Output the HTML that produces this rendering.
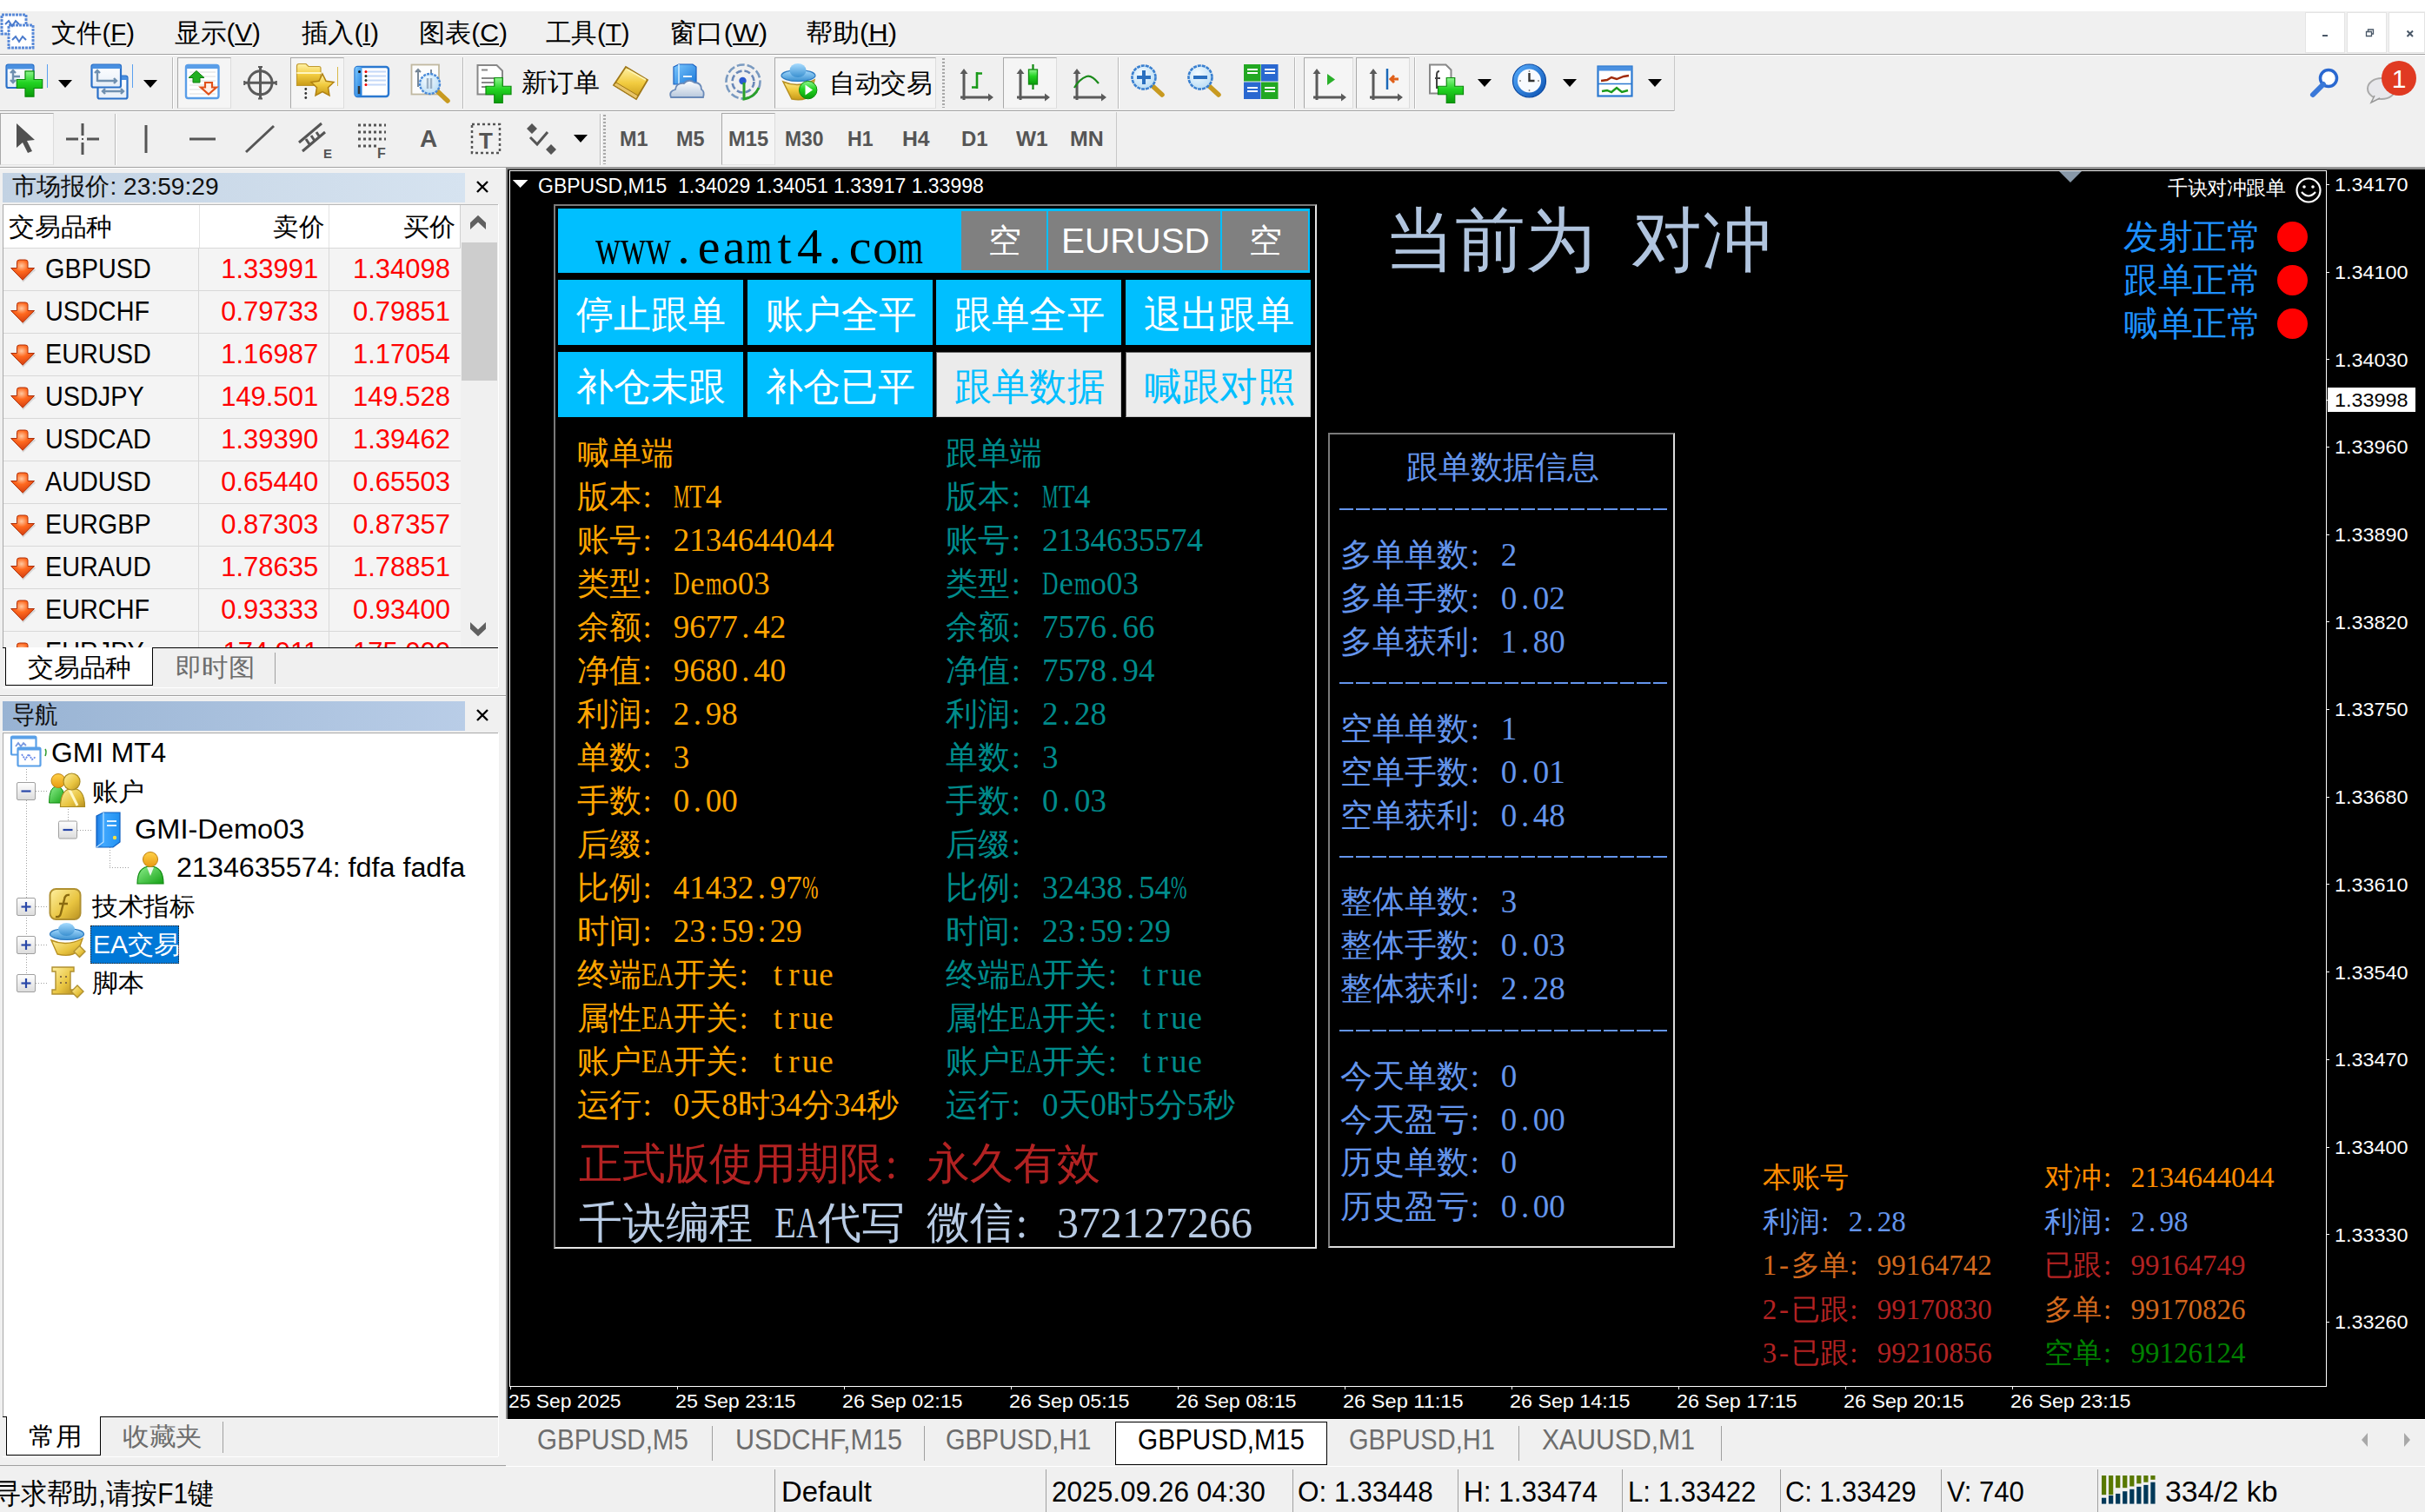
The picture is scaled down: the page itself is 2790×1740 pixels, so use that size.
<!DOCTYPE html><html><head><meta charset="utf-8"><title>MT4</title><style>
*{margin:0;padding:0;box-sizing:border-box}
html,body{width:2790px;height:1740px;overflow:hidden;background:#f0f0f0}
body{position:relative;font-family:'Liberation Sans',sans-serif}
body>div{position:absolute;white-space:nowrap}
i{display:inline-block;width:.5em;text-align:center;font-style:normal}
b{display:inline-block;width:1em;font-weight:inherit}
u{text-decoration:underline;text-decoration-thickness:2px;text-underline-offset:2px}
</style></head><body>
<div style="left:0px;top:0px;width:2790px;height:1740px;background:#f0f0f0"></div>
<div style="left:0px;top:0px;width:2790px;height:13px;background:#fff"></div>
<div style="left:0px;top:62px;width:2790px;height:1px;background:#a0a0a0"></div>
<div style="left:0px;top:127px;width:1927px;height:1px;background:#a0a0a0"></div>
<div style="left:0px;top:192px;width:2790px;height:1px;background:#a0a0a0"></div>
<div style="left:0px;top:63px;width:2790px;height:1px;background:#fff"></div>
<div style="left:0px;top:128px;width:1927px;height:1px;background:#fff"></div>
<svg style="position:absolute;left:0px;top:14px;" width="44" height="46" viewBox="0 0 44 46">
<rect x="2" y="3" width="28" height="22" fill="#fff" stroke="#5a8ad8" stroke-width="3" stroke-dasharray="3 1"/>
<rect x="10" y="15" width="28" height="26" fill="#fff" stroke="#5a8ad8" stroke-width="3" stroke-dasharray="3 1"/>
<path d="M6 14 l4 -4 l4 6 l4 -6 l4 4" stroke="#4a7acc" stroke-width="2" fill="none"/>
<path d="M14 32 l4 -4 l4 6 l4 -6 l4 4" stroke="#4a7acc" stroke-width="2" fill="none"/>
</svg>
<div id="t1" style="left:58.8px;top:23.1px;font-size:30px;line-height:30px;color:#000;font-family:'Liberation Sans',sans-serif;transform:scaleX(0.9762);transform-origin:left top;"><b>文</b><b>件</b>(<u>F</u>)</div>
<div id="t2" style="left:201px;top:23.1px;font-size:30px;line-height:30px;color:#000;font-family:'Liberation Sans',sans-serif;transform:scaleX(0.9899);transform-origin:left top;"><b>显</b><b>示</b>(<u>V</u>)</div>
<div id="t3" style="left:346.6px;top:23.1px;font-size:30px;line-height:30px;color:#000;font-family:'Liberation Sans',sans-serif;transform:scaleX(1.0077);transform-origin:left top;"><b>插</b><b>入</b>(<u>I</u>)</div>
<div id="t4" style="left:481.5px;top:23.1px;font-size:30px;line-height:30px;color:#000;font-family:'Liberation Sans',sans-serif;transform:scaleX(1.0035);transform-origin:left top;"><b>图</b><b>表</b>(<u>C</u>)</div>
<div id="t5" style="left:627.9px;top:23.1px;font-size:30px;line-height:30px;color:#000;font-family:'Liberation Sans',sans-serif;transform:scaleX(0.9824);transform-origin:left top;"><b>工</b><b>具</b>(<u>T</u>)</div>
<div id="t6" style="left:770px;top:23.1px;font-size:30px;line-height:30px;color:#000;font-family:'Liberation Sans',sans-serif;transform:scaleX(1.0446);transform-origin:left top;"><b>窗</b><b>口</b>(<u>W</u>)</div>
<div id="t7" style="left:927px;top:23.1px;font-size:30px;line-height:30px;color:#000;font-family:'Liberation Sans',sans-serif;transform:scaleX(1.0336);transform-origin:left top;"><b>帮</b><b>助</b>(<u>H</u>)</div>
<div style="left:2652px;top:14px;width:46px;height:47px;background:#fff;border:1px solid #e4e4e4"></div>
<div style="left:2700px;top:14px;width:46px;height:47px;background:#fff;border:1px solid #e4e4e4"></div>
<div style="left:2748px;top:14px;width:42px;height:47px;background:#fff;border:1px solid #e4e4e4"></div>
<svg style="position:absolute;left:2652px;top:14px;" width="138" height="47" viewBox="0 0 138 47">
<rect x="20" y="26" width="6" height="2" fill="#4a5868"/>
<path d="M70.5 27.5 h6 v-5 h-6 z M72.5 22.5 v-2.5 h6 v5 h-2" fill="none" stroke="#4a5868" stroke-width="1.3"/>
<path d="M117.5 21.5 l6.5 6.5 M124 21.5 l-6.5 6.5" stroke="#4a5868" stroke-width="2"/>
</svg>
<div style="left:204px;top:66px;width:62px;height:59px;background:#f5f5f5;border:1px solid;border-color:#a8a8a8 #dcdcdc #e4e4e4 #a8a8a8"></div>
<div style="left:334px;top:66px;width:62px;height:59px;background:#f5f5f5;border:1px solid;border-color:#a8a8a8 #dcdcdc #e4e4e4 #a8a8a8"></div>
<div style="left:891px;top:66px;width:186px;height:59px;background:#f5f5f5;border:1px solid;border-color:#a8a8a8 #dcdcdc #e4e4e4 #a8a8a8"></div>
<div style="left:1154px;top:66px;width:62px;height:59px;background:#f5f5f5;border:1px solid;border-color:#a8a8a8 #dcdcdc #e4e4e4 #a8a8a8"></div>
<div style="left:1500px;top:66px;width:57px;height:59px;background:#f5f5f5;border:1px solid;border-color:#a8a8a8 #dcdcdc #e4e4e4 #a8a8a8"></div>
<div style="left:1560px;top:66px;width:62px;height:59px;background:#f5f5f5;border:1px solid;border-color:#a8a8a8 #dcdcdc #e4e4e4 #a8a8a8"></div>
<div style="left:198px;top:66px;width:1px;height:59px;background:#b8b8b8"></div>
<div style="left:199px;top:66px;width:1px;height:59px;background:#fff"></div>
<div style="left:532px;top:66px;width:1px;height:59px;background:#b8b8b8"></div>
<div style="left:533px;top:66px;width:1px;height:59px;background:#fff"></div>
<div style="left:1286px;top:66px;width:1px;height:59px;background:#b8b8b8"></div>
<div style="left:1287px;top:66px;width:1px;height:59px;background:#fff"></div>
<div style="left:1489px;top:66px;width:1px;height:59px;background:#b8b8b8"></div>
<div style="left:1490px;top:66px;width:1px;height:59px;background:#fff"></div>
<div style="left:1627px;top:66px;width:1px;height:59px;background:#b8b8b8"></div>
<div style="left:1628px;top:66px;width:1px;height:59px;background:#fff"></div>
<div style="left:1084px;top:67px;width:3px;height:57px;background:repeating-linear-gradient(#a8a8a8 0 2px,transparent 2px 4px)"></div>
<div style="left:1926px;top:64px;width:1px;height:64px;background:#c8c8c8"></div>
<div style="left:53.5px;top:74px;width:1px;height:27px;background:#5aa0f0"></div>
<svg style="position:absolute;left:66.5px;top:92px;" width="16" height="9" viewBox="0 0 16 9"><path d="M0 0 H16 L8 9 Z" fill="#000"/></svg>
<div style="left:151.5px;top:74px;width:1px;height:27px;background:#5aa0f0"></div>
<svg style="position:absolute;left:164.5px;top:92px;" width="16" height="9" viewBox="0 0 16 9"><path d="M0 0 H16 L8 9 Z" fill="#000"/></svg>
<svg style="position:absolute;left:0px;top:64px" width="950" height="62" viewBox="0 64 950 62"><defs>
<linearGradient id="gG" x1="0" y1="0" x2="0" y2="1"><stop offset="0" stop-color="#8ff58f"/><stop offset=".45" stop-color="#22d422"/><stop offset="1" stop-color="#0a9a0a"/></linearGradient>
<linearGradient id="gWin" x1="0" y1="0" x2="0" y2="1"><stop offset="0" stop-color="#fff"/><stop offset="1" stop-color="#e6eef8"/></linearGradient>
<linearGradient id="gY" x1="0" y1="0" x2="0" y2="1"><stop offset="0" stop-color="#fff2a8"/><stop offset=".5" stop-color="#f2cc40"/><stop offset="1" stop-color="#c89a18"/></linearGradient>
<linearGradient id="gB" x1="0" y1="0" x2="1" y2="1"><stop offset="0" stop-color="#7cc8ff"/><stop offset="1" stop-color="#1a78d8"/></linearGradient>
<linearGradient id="gCl" x1="0" y1="0" x2="0" y2="1"><stop offset="0" stop-color="#ffffff"/><stop offset="1" stop-color="#b8c8dc"/></linearGradient>
<radialGradient id="gGl" cx=".4" cy=".35" r=".7"><stop offset="0" stop-color="#f4fbff"/><stop offset="1" stop-color="#b8dcf4"/></radialGradient>
<linearGradient id="gHat" x1="0" y1="0" x2="0" y2="1"><stop offset="0" stop-color="#a8dcff"/><stop offset="1" stop-color="#3a90d0"/></linearGradient>
<linearGradient id="gClk" x1="0" y1="0" x2="1" y2="1"><stop offset="0" stop-color="#5ab0ff"/><stop offset="1" stop-color="#0a50b0"/></linearGradient>
</defs><rect x="7.5" y="74.5" width="31" height="26.5" rx="2" fill="url(#gWin)" stroke="#2a70c8" stroke-width="2.2"/><path d="M7.5 77 q0 -2.5 2.5 -2.5 h26 q2.5 0 2.5 2.5 v2.5 h-31 z" fill="#4a90e0"/><path d="M15 81 v14 M12 84 l3 -3 3 3 M12 92 l3 3 3 -3 M15 88 h8" stroke="#7090b0" stroke-width="2.4" fill="none"/><path d="M29.0 81.8 h10 v9.7 h9.7 v10 h-9.7 v9.7 h-10 v-9.7 h-9.7 v-10 h9.7 z" fill="url(#gG)" stroke="#0a8a0a" stroke-width="1.2"/><rect x="112.5" y="87.5" width="34" height="26" rx="2" fill="url(#gWin)" stroke="#2a70c8" stroke-width="2.2"/><path d="M112.5 90 q0 -2.5 2.5 -2.5 h29 q2.5 0 2.5 2.5 v2 h-34 z" fill="#4a90e0"/><path d="M118 105 h24 M121 102 l-3 3 3 3 M139 102 l3 3 -3 3" stroke="#7090b0" stroke-width="2.4" fill="none"/><rect x="105.5" y="74.5" width="33.5" height="26" rx="2" fill="url(#gWin)" stroke="#2a70c8" stroke-width="2.2"/><path d="M105.5 77 q0 -2.5 2.5 -2.5 h28.5 q2.5 0 2.5 2.5 v2 h-33.5 z" fill="#4a90e0"/><path d="M112 81 v13 M109 84 l3 -3 3 3 M112 93 h22 M131 90 l3 3 -3 3" stroke="#7090b0" stroke-width="2.4" fill="none"/><rect x="214" y="75" width="37.5" height="38" rx="2.5" fill="#fff" stroke="#5a9ee8" stroke-width="2.4"/><rect x="214" y="75" width="37.5" height="4" fill="#5a9ee8"/><path d="M218 83 h30 M218 88 h30 M218 93 h30 M218 98 h30 M218 103 h30 M218 108 h30" stroke="#e8e8e8" stroke-width="1.5"/><path d="M226 81.5 l9 8 h-5 v5.5 h-8 v-5.5 h-5 z" fill="#22b022" stroke="#108010" stroke-width="1"/><path d="M240 108.5 l9 -8 h-5 v-5.5 h-8 v5.5 h-5 z" fill="#fff0e8" stroke="#e0501a" stroke-width="2.2"/><circle cx="299.5" cy="95.3" r="13.5" fill="none" stroke="#5a5a5a" stroke-width="3"/><path d="M299.5 77 v37 M281 95.3 h37" stroke="#5a5a5a" stroke-width="3"/><path d="M297 77 h5 M297 113.5 h5 M281.2 93 v5 M317.8 93 v5" stroke="#5a5a5a" stroke-width="2"/><path d="M341.5 76 q0 -2.5 2.5 -2.5 h8 l3 3 h12 q2 0 2 2 v20 h-27.5 z" fill="url(#gY)" stroke="#c09a30" stroke-width="1.2"/><path d="M341.5 84 h28" stroke="#fff6c0" stroke-width="2"/><path d="M371 85 l4 8.2 9 1.3 -6.5 6.3 1.5 9 -8 -4.3 -8 4.3 1.5 -9 -6.5 -6.3 9 -1.3 z" fill="url(#gY)" stroke="#b08010" stroke-width="1.5"/><circle cx="351.8" cy="102.5" r="1.4" fill="#333"/><circle cx="351.8" cy="107.5" r="1.4" fill="#333"/><circle cx="351.8" cy="112.5" r="1.4" fill="#333"/><path d="M388.5 77 v22" stroke="#d8b848" stroke-width="1"/><rect x="408.5" y="77" width="38.5" height="34" rx="3" fill="#fff" stroke="#2a78d0" stroke-width="2.4"/><rect x="408.5" y="77" width="8" height="34" rx="2" fill="url(#gB)"/><path d="M413 99 v9" stroke="#333" stroke-width="2.5"/><path d="M423 82.5 h21 M423 87.5 h21 M423 92.5 h21 M423 97.5 h21" stroke="#c4d8f8" stroke-width="1.8"/><circle cx="413.5" cy="82.5" r="1.5" fill="#111"/><circle cx="421" cy="82.5" r="1.5" fill="#e00"/><circle cx="421" cy="87.5" r="1.5" fill="#232"/><circle cx="421" cy="92.5" r="1.5" fill="#232"/><circle cx="421" cy="97.5" r="1.5" fill="#e00"/><rect x="473.5" y="74.5" width="31.5" height="34" fill="#fcfcfc" stroke="#c0b8a0" stroke-width="1.8"/><path d="M481 80 v20 M478 83 l3 -3 3 3 M496 80 v6" stroke="#7a8a9a" stroke-width="2"/><path d="M501 103 l14 13" stroke="#c89a20" stroke-width="5.5" stroke-linecap="round"/><circle cx="494.5" cy="96.5" r="11.5" fill="url(#gGl)" stroke="#4a8ad8" stroke-width="2.4" stroke-dasharray="3 1.2"/><path d="M492 90 v12 M496 90 v12" stroke="#9ab0c4" stroke-width="2.5"/><path d="M549.5 75 h22 l6.5 6.5 v27 h-28.5 z" fill="#fff" stroke="#888" stroke-width="2"/><path d="M554 80.5 h7 M554 90 h18 M554 95 h14 M554 100 h8" stroke="#888" stroke-width="2.2"/><path d="M568.75 89.5 h9.5 v9.75 h9.75 v9.5 h-9.75 v9.75 h-9.5 v-9.75 h-9.75 v-9.5 h9.75 z" fill="url(#gG)" stroke="#0a8a0a" stroke-width="1.2"/><path d="M706 98 L720 77 L745 92 L732 114 Z" fill="url(#gY)" stroke="#a07818" stroke-width="1.8"/><path d="M706 98 L732 114 L734 110 L709 95 Z" fill="#e8c468" stroke="#a07818" stroke-width="1"/><path d="M722 80 L743 92" stroke="#fff4b0" stroke-width="2"/><path d="M775 77 l6 -3 h16 l4 3 v20 h-26 z" fill="url(#gB)" stroke="#1a60c0" stroke-width="1.2"/><path d="M781 74 v23" stroke="#d8f0ff" stroke-width="1.5"/><path d="M786 88 h10" stroke="#e8f6ff" stroke-width="2"/><path d="M772 112 q-3 -7 5 -9 q1 -8 10 -7 q5 -6 12 -1 q8 0 8 8 q4 2 2 9 z" fill="url(#gCl)" stroke="#6a8ab8" stroke-width="1.8"/><circle cx="855" cy="94" r="19.5" fill="none" stroke="#7a9ac0" stroke-width="2.6" stroke-dasharray="9 3"/><circle cx="855" cy="94" r="12.5" fill="none" stroke="#6a88b8" stroke-width="2.6" stroke-dasharray="7 3"/><circle cx="854.5" cy="93" r="4.2" fill="#2a5ad0"/><path d="M856 95 v19 q12 -2 17 -13" stroke="#2aa02a" stroke-width="3" fill="none"/><path d="M901 94 q18 8 36 -2 l-4 16 q-6 9 -22 6 z" fill="url(#gY)" stroke="#b89020" stroke-width="1.5"/><ellipse cx="918.5" cy="87" rx="19.5" ry="6.5" fill="url(#gHat)" stroke="#2a78c0" stroke-width="1.2"/><ellipse cx="918" cy="81" rx="9.5" ry="8" fill="url(#gHat)"/><circle cx="929.7" cy="103.6" r="10.2" fill="url(#gG)" stroke="#0a8a0a" stroke-width="1"/><path d="M926.5 97.5 l8.5 6 -8.5 6 z" fill="#fff"/></svg>
<div id="t8" style="left:599.5px;top:80.4px;font-size:30px;line-height:30px;color:#000;font-family:'Liberation Sans',sans-serif;transform:scaleX(1.0000);transform-origin:left top;"><b>新</b><b>订</b><b>单</b></div>
<div id="t9" style="left:954px;top:81px;font-size:30px;line-height:30px;color:#000;font-family:'Liberation Sans',sans-serif;transform:scaleX(0.9912);transform-origin:left top;"><b>自</b><b>动</b><b>交</b><b>易</b></div>
<svg style="position:absolute;left:1700px;top:91px;" width="16" height="9" viewBox="0 0 16 9"><path d="M0 0 H16 L8 9 Z" fill="#000"/></svg>
<svg style="position:absolute;left:1798px;top:91px;" width="16" height="9" viewBox="0 0 16 9"><path d="M0 0 H16 L8 9 Z" fill="#000"/></svg>
<svg style="position:absolute;left:1896px;top:91px;" width="16" height="9" viewBox="0 0 16 9"><path d="M0 0 H16 L8 9 Z" fill="#000"/></svg>
<svg style="position:absolute;left:1090px;top:64px" width="840" height="62" viewBox="1090 64 840 62"><defs>
<linearGradient id="hG" x1="0" y1="0" x2="0" y2="1"><stop offset="0" stop-color="#8ff58f"/><stop offset=".45" stop-color="#22d422"/><stop offset="1" stop-color="#0a9a0a"/></linearGradient>
<linearGradient id="hWin" x1="0" y1="0" x2="0" y2="1"><stop offset="0" stop-color="#fff"/><stop offset="1" stop-color="#e6eef8"/></linearGradient>
<linearGradient id="hY" x1="0" y1="0" x2="0" y2="1"><stop offset="0" stop-color="#fff2a8"/><stop offset=".5" stop-color="#f2cc40"/><stop offset="1" stop-color="#c89a18"/></linearGradient>
<linearGradient id="hB" x1="0" y1="0" x2="1" y2="1"><stop offset="0" stop-color="#7cc8ff"/><stop offset="1" stop-color="#1a78d8"/></linearGradient>
<linearGradient id="hCl" x1="0" y1="0" x2="0" y2="1"><stop offset="0" stop-color="#ffffff"/><stop offset="1" stop-color="#b8c8dc"/></linearGradient>
<radialGradient id="hGl" cx=".4" cy=".35" r=".7"><stop offset="0" stop-color="#f4fbff"/><stop offset="1" stop-color="#b8dcf4"/></radialGradient>
<linearGradient id="hHat" x1="0" y1="0" x2="0" y2="1"><stop offset="0" stop-color="#a8dcff"/><stop offset="1" stop-color="#3a90d0"/></linearGradient>
<linearGradient id="hClk" x1="0" y1="0" x2="1" y2="1"><stop offset="0" stop-color="#5ab0ff"/><stop offset="1" stop-color="#0a50b0"/></linearGradient>
</defs><path d="M1109 115 v-32 M1105 112 h34" stroke="#5a5a5a" stroke-width="3" fill="none"/><path d="M1104.5 85 l4.5 -6 4.5 6 z M1137 107.5 l6 4.5 -6 4.5 z" fill="#5a5a5a"/><path d="M1124 83 v19 M1124 84.5 h6 M1118 100.5 h6" stroke="#1a9a1a" stroke-width="2.6" fill="none"/><path d="M1174 115 v-32 M1170 112 h34" stroke="#5a5a5a" stroke-width="3" fill="none"/><path d="M1169.5 85 l4.5 -6 4.5 6 z M1202 107.5 l6 4.5 -6 4.5 z" fill="#5a5a5a"/><rect x="1183.5" y="80" width="10" height="17" fill="url(#hG)" stroke="#108a10" stroke-width="1.3"/><path d="M1188.5 74 v6 M1188.5 97 v6" stroke="#108a10" stroke-width="2.2"/><path d="M1239 115 v-32 M1235 112 h34" stroke="#5a5a5a" stroke-width="3" fill="none"/><path d="M1234.5 85 l4.5 -6 4.5 6 z M1267 107.5 l6 4.5 -6 4.5 z" fill="#5a5a5a"/><path d="M1236 101 q6 -10 14 -13 q6 -2 14 8" stroke="#1a8a1a" stroke-width="2.2" fill="none"/><path d="M1325 98 l12 11" stroke="#c89a20" stroke-width="5.5" stroke-linecap="round"/><circle cx="1316" cy="89" r="13.5" fill="url(#hGl)" stroke="#3a80d0" stroke-width="2.6" stroke-dasharray="4 1"/><path d="M1308 89 h16" stroke="#2a70c0" stroke-width="4"/><path d="M1316 81 v16" stroke="#2a70c0" stroke-width="4"/><path d="M1390 98 l12 11" stroke="#c89a20" stroke-width="5.5" stroke-linecap="round"/><circle cx="1381" cy="89" r="13.5" fill="url(#hGl)" stroke="#3a80d0" stroke-width="2.6" stroke-dasharray="4 1"/><path d="M1373 89 h16" stroke="#2a70c0" stroke-width="4"/><rect x="1431" y="74" width="19.5" height="19.5" fill="#22a822"/><rect x="1451" y="74" width="19.5" height="19.5" fill="#2a68d0"/><rect x="1431" y="94.5" width="19.5" height="19.5" fill="#2a68d0"/><rect x="1451" y="94.5" width="19.5" height="19.5" fill="#22a822"/><path d="M1435 84 h12 M1455 84 h12 M1435 105 h12 M1455 105 h12 M1435 80 h12 M1455 80 h12 M1435 101 h12 M1455 101 h12" stroke="#fff" stroke-width="2"/><path d="M1515 115 v-32 M1511 112 h34" stroke="#5a5a5a" stroke-width="3" fill="none"/><path d="M1510.5 85 l4.5 -6 4.5 6 z M1543 107.5 l6 4.5 -6 4.5 z" fill="#5a5a5a"/><path d="M1527 85 l9 6.5 -9 6.5 z" fill="#2ab02a"/><path d="M1580 115 v-32 M1576 112 h34" stroke="#5a5a5a" stroke-width="3" fill="none"/><path d="M1575.5 85 l4.5 -6 4.5 6 z M1608 107.5 l6 4.5 -6 4.5 z" fill="#5a5a5a"/><path d="M1596 79 v24" stroke="#1a68b8" stroke-width="2.5"/><path d="M1609 91 h-8 M1604 87 l-4 4 4 4" stroke="#e0601a" stroke-width="3" fill="none"/><path d="M1645 74.5 h18.5 l6 6 v27 h-24.5 z" fill="#fff" stroke="#888" stroke-width="2"/><path d="M1656 82 q-3 0 -3 4 v16 M1651 90 h6" stroke="#444" stroke-width="2" fill="none"/><path d="M1664.25 89.5 h9.5 v9.75 h9.75 v9.5 h-9.75 v9.75 h-9.5 v-9.75 h-9.75 v-9.5 h9.75 z" fill="url(#hG)" stroke="#0a8a0a" stroke-width="1.2"/><circle cx="1759.5" cy="93" r="19" fill="url(#hClk)" stroke="#0a48a0" stroke-width="1.2"/><circle cx="1759.5" cy="93" r="13.5" fill="#f8fbff"/><path d="M1759.5 84 v9 h6" stroke="#333" stroke-width="2.4" fill="none"/><path d="M1759.5 81 v2 M1771 93 h-2 M1759.5 105 v-2 M1748 93 h2" stroke="#888" stroke-width="1.5"/><rect x="1838.5" y="76.5" width="39" height="34" fill="#fff" stroke="#2a78d0" stroke-width="2.2"/><rect x="1838.5" y="76.5" width="39" height="5" fill="#4a90e0"/><path d="M1842 93 l7 -1 5 -3 6 2 8 -3 6 -1" stroke="#a02a0a" stroke-width="2.4" fill="none"/><path d="M1839 96.5 h38" stroke="#2a78d0" stroke-width="1.5"/><path d="M1843 105 l6 -1 5 2 6 -5 6 5 7 -2" stroke="#1a9a1a" stroke-width="2.4" fill="none"/></svg>
<svg style="position:absolute;left:2656px;top:76px;" width="40" height="38" viewBox="0 0 40 38"><circle cx="23" cy="14" r="9.5" fill="#fff" stroke="#2a68d0" stroke-width="3.5"/><path d="M17 21 l-12 12" stroke="#3a78d8" stroke-width="6" stroke-linecap="round"/></svg>
<svg style="position:absolute;left:2720px;top:66px;" width="70" height="56" viewBox="0 0 70 56">
<ellipse cx="20" cy="36" rx="16" ry="12" fill="#e8e8ec" stroke="#aaa" stroke-width="2"/>
<path d="M12 44 l-4 8 10 -5" fill="#e8e8ec" stroke="#999" stroke-width="1.5"/>
<circle cx="40" cy="24" r="20" fill="#e03a22"/>
<text x="40" y="35" font-family="Liberation Sans" font-size="30" fill="#fff" text-anchor="middle">1</text>
</svg>
<div style="left:0px;top:130px;width:62px;height:60px;background:#f5f5f5;border:1px solid;border-color:#a8a8a8 #dcdcdc #e4e4e4 #a8a8a8"></div>
<div style="left:132px;top:131px;width:1px;height:59px;background:#b8b8b8"></div>
<div style="left:133px;top:131px;width:1px;height:59px;background:#fff"></div>
<div style="left:830px;top:130px;width:62px;height:60px;background:#f5f5f5;border:1px solid;border-color:#a8a8a8 #dcdcdc #e4e4e4 #a8a8a8"></div>
<div style="left:690px;top:131px;width:1px;height:59px;background:#b8b8b8"></div>
<div style="left:691px;top:131px;width:1px;height:59px;background:#fff"></div>
<div style="left:694px;top:132px;width:3px;height:57px;background:repeating-linear-gradient(#a8a8a8 0 2px,transparent 2px 4px)"></div>
<div style="left:1284px;top:129px;width:1px;height:63px;background:#c8c8c8"></div>
<svg style="position:absolute;left:14px;top:140px;" width="30" height="40" viewBox="0 0 30 40"><path d="M5 2 v28 l7 -6 6 12 5 -2 -6 -12 9 -1 z" fill="#505050"/></svg>
<svg style="position:absolute;left:74px;top:140px;" width="42" height="40" viewBox="0 0 42 40"><path d="M21 2 v14 M21 24 v14 M2 20 h14 M26 20 h14" stroke="#555" stroke-width="3"/><rect x="20" y="19" width="2" height="2" fill="#555"/></svg>
<svg style="position:absolute;left:160px;top:142px;" width="16" height="36" viewBox="0 0 16 36"><path d="M8 2 v32" stroke="#555" stroke-width="3"/></svg>
<svg style="position:absolute;left:216px;top:150px;" width="36" height="20" viewBox="0 0 36 20"><path d="M2 10 h30" stroke="#555" stroke-width="3"/></svg>
<svg style="position:absolute;left:280px;top:142px;" width="38" height="36" viewBox="0 0 38 36"><path d="M3 33 l32 -30" stroke="#555" stroke-width="3"/></svg>
<svg style="position:absolute;left:340px;top:138px;" width="46" height="46" viewBox="0 0 46 46"><path d="M4 26 l26 -22 M8 36 l26 -22 M12 22 l4 6 M18 18 l4 6 M24 14 l4 6" stroke="#555" stroke-width="3"/>
<text x="32" y="44" font-family="Liberation Sans" font-weight="bold" font-size="15" fill="#555">E</text></svg>
<svg style="position:absolute;left:410px;top:140px;" width="40" height="44" viewBox="0 0 40 44"><path d="M2 4 h32 M2 12 h32 M2 20 h32 M2 28 h22" stroke="#555" stroke-width="3" stroke-dasharray="3 3"/>
<text x="24" y="42" font-family="Liberation Sans" font-weight="bold" font-size="16" fill="#555">F</text></svg>
<div id="t10" style="left:483px;top:145.52px;font-size:28px;line-height:28px;color:#555;font-family:'Liberation Sans',sans-serif;font-weight:bold">A</div>
<svg style="position:absolute;left:540px;top:140px;" width="38" height="40" viewBox="0 0 38 40"><rect x="3" y="3" width="32" height="33" fill="none" stroke="#555" stroke-width="2.5" stroke-dasharray="3 3"/>
<text x="19" y="31" font-family="Liberation Sans" font-weight="bold" font-size="26" fill="#555" text-anchor="middle">T</text></svg>
<svg style="position:absolute;left:604px;top:140px;" width="40" height="40" viewBox="0 0 40 40"><path d="M2 8 l6 -6 6 6 -6 6 z M24 32 l6 -6 6 6 -6 6 z" fill="#555"/><path d="M6 18 l8 8 12 -14" stroke="#555" stroke-width="3" fill="none"/></svg>
<svg style="position:absolute;left:660px;top:155px;" width="16" height="9" viewBox="0 0 16 9"><path d="M0 0 H16 L8 9 Z" fill="#000"/></svg>
<div id="t11" style="left:713px;top:147.58px;font-size:24.5px;line-height:24.5px;color:#555;font-family:'Liberation Sans',sans-serif;transform:scaleX(0.9565);transform-origin:left top;font-weight:bold">M1</div>
<div id="t12" style="left:778px;top:147.58px;font-size:24.5px;line-height:24.5px;color:#555;font-family:'Liberation Sans',sans-serif;transform:scaleX(0.9565);transform-origin:left top;font-weight:bold">M5</div>
<div id="t13" style="left:838px;top:147.58px;font-size:24.5px;line-height:24.5px;color:#555;font-family:'Liberation Sans',sans-serif;transform:scaleX(0.9667);transform-origin:left top;font-weight:bold">M15</div>
<div id="t14" style="left:903px;top:147.58px;font-size:24.5px;line-height:24.5px;color:#555;font-family:'Liberation Sans',sans-serif;transform:scaleX(0.9341);transform-origin:left top;font-weight:bold">M30</div>
<div id="t15" style="left:975.3px;top:147.58px;font-size:24.5px;line-height:24.5px;color:#555;font-family:'Liberation Sans',sans-serif;transform:scaleX(0.9430);transform-origin:left top;font-weight:bold">H1</div>
<div id="t16" style="left:1038px;top:147.58px;font-size:24.5px;line-height:24.5px;color:#555;font-family:'Liberation Sans',sans-serif;transform:scaleX(1.0100);transform-origin:left top;font-weight:bold">H4</div>
<div id="t17" style="left:1106px;top:147.58px;font-size:24.5px;line-height:24.5px;color:#555;font-family:'Liberation Sans',sans-serif;transform:scaleX(0.9767);transform-origin:left top;font-weight:bold">D1</div>
<div id="t18" style="left:1169px;top:147.58px;font-size:24.5px;line-height:24.5px;color:#555;font-family:'Liberation Sans',sans-serif;transform:scaleX(0.9966);transform-origin:left top;font-weight:bold">W1</div>
<div id="t19" style="left:1231px;top:147.58px;font-size:24.5px;line-height:24.5px;color:#555;font-family:'Liberation Sans',sans-serif;transform:scaleX(1.0162);transform-origin:left top;font-weight:bold">MN</div>
<div style="left:0px;top:193px;width:582px;height:1px;background:#fff"></div>
<div style="left:3px;top:199px;width:532px;height:34px;background:linear-gradient(90deg,#c2d2e3,#d6e3f0)"></div>
<div id="t20" style="left:14px;top:200.94px;font-size:28px;line-height:28px;color:#111;font-family:'Liberation Sans',sans-serif;transform:scaleX(1.0043);transform-origin:left top;"><b>市</b><b>场</b><b>报</b><b>价</b>: 23:59:29</div>
<svg style="position:absolute;left:546.5px;top:206.5px;" width="16" height="16" viewBox="0 0 16 16"><path d="M2 2 L14 14 M14 2 L2 14" stroke="#000" stroke-width="2.4"/></svg>
<div style="left:3px;top:235px;width:570px;height:510px;background:#f4f4f4;border-top:1px solid #b8b8b8;border-left:1px solid #a8a8a8"></div>
<div style="left:4px;top:236px;width:524.5px;height:49px;background:#fff"></div>
<div style="left:528.5px;top:236px;width:1px;height:49px;background:#d0d0d0"></div>
<div style="left:4px;top:284.5px;width:526px;height:1px;background:#d8d8d8"></div>
<div style="left:228.5px;top:236px;width:1px;height:49px;background:#e4e4e4"></div>
<div style="left:378px;top:236px;width:1px;height:49px;background:#e4e4e4"></div>
<div style="left:530px;top:236px;width:43px;height:509px;background:#f0f0f0"></div>
<div style="left:573px;top:235px;width:1px;height:556px;background:#fff"></div>
<div id="t21" style="left:10px;top:247.42px;font-size:29px;line-height:29px;color:#000;font-family:'Liberation Sans',sans-serif;transform:scaleX(1.0261);transform-origin:left top;"><b>交</b><b>易</b><b>品</b><b>种</b></div>
<div id="t22" style="left:314px;top:247.42px;font-size:29px;line-height:29px;color:#000;font-family:'Liberation Sans',sans-serif;transform:scaleX(1.0175);transform-origin:left top;"><b>卖</b><b>价</b></div>
<div id="t23" style="left:464px;top:247.42px;font-size:29px;line-height:29px;color:#000;font-family:'Liberation Sans',sans-serif;transform:scaleX(1.0357);transform-origin:left top;"><b>买</b><b>价</b></div>
<div style="left:4px;top:285px;width:526px;height:460px;overflow:hidden"><div style="position:absolute;left:0;top:48.50px;width:526px;height:1px;background:#d8d8d8"></div><svg style="position:absolute;left:6px;top:12.00px" width="34" height="30" viewBox="0 0 34 30"><defs><radialGradient id="ga0" cx=".45" cy=".3" r=".8"><stop offset="0" stop-color="#ffc8a0"/><stop offset=".35" stop-color="#ff6a20"/><stop offset="1" stop-color="#c83008"/></radialGradient></defs><path d="M16 27 l14 -14 -1 2" stroke="#d8d8d8" stroke-width="2" fill="none"/><path d="M9.5 4.5 q0 -2.5 3 -2.5 h6.5 q3 0 3 2.5 v7 h7.5 l-13.4 13.8 -13.4 -13.8 h6.8 z" fill="url(#ga0)" stroke="#b03008" stroke-width="1"/></svg><div style="position:absolute;left:48px;top:9.04px;font-size:31px;line-height:31px;color:#000;transform:scaleX(0.93);transform-origin:left top">GBPUSD</div><div style="position:absolute;right:163.8px;top:9.04px;font-size:31px;line-height:31px;color:#f00;transform:scaleX(1.0);transform-origin:right top">1.33991</div><div style="position:absolute;right:12px;top:9.04px;font-size:31px;line-height:31px;color:#f00;transform:scaleX(1.0);transform-origin:right top">1.34098</div><div style="position:absolute;left:0;top:97.55px;width:526px;height:1px;background:#d8d8d8"></div><svg style="position:absolute;left:6px;top:61.05px" width="34" height="30" viewBox="0 0 34 30"><defs><radialGradient id="ga1" cx=".45" cy=".3" r=".8"><stop offset="0" stop-color="#ffc8a0"/><stop offset=".35" stop-color="#ff6a20"/><stop offset="1" stop-color="#c83008"/></radialGradient></defs><path d="M16 27 l14 -14 -1 2" stroke="#d8d8d8" stroke-width="2" fill="none"/><path d="M9.5 4.5 q0 -2.5 3 -2.5 h6.5 q3 0 3 2.5 v7 h7.5 l-13.4 13.8 -13.4 -13.8 h6.8 z" fill="url(#ga1)" stroke="#b03008" stroke-width="1"/></svg><div style="position:absolute;left:48px;top:58.09px;font-size:31px;line-height:31px;color:#000;transform:scaleX(0.93);transform-origin:left top">USDCHF</div><div style="position:absolute;right:163.8px;top:58.09px;font-size:31px;line-height:31px;color:#f00;transform:scaleX(1.0);transform-origin:right top">0.79733</div><div style="position:absolute;right:12px;top:58.09px;font-size:31px;line-height:31px;color:#f00;transform:scaleX(1.0);transform-origin:right top">0.79851</div><div style="position:absolute;left:0;top:146.60px;width:526px;height:1px;background:#d8d8d8"></div><svg style="position:absolute;left:6px;top:110.10px" width="34" height="30" viewBox="0 0 34 30"><defs><radialGradient id="ga2" cx=".45" cy=".3" r=".8"><stop offset="0" stop-color="#ffc8a0"/><stop offset=".35" stop-color="#ff6a20"/><stop offset="1" stop-color="#c83008"/></radialGradient></defs><path d="M16 27 l14 -14 -1 2" stroke="#d8d8d8" stroke-width="2" fill="none"/><path d="M9.5 4.5 q0 -2.5 3 -2.5 h6.5 q3 0 3 2.5 v7 h7.5 l-13.4 13.8 -13.4 -13.8 h6.8 z" fill="url(#ga2)" stroke="#b03008" stroke-width="1"/></svg><div style="position:absolute;left:48px;top:107.14px;font-size:31px;line-height:31px;color:#000;transform:scaleX(0.93);transform-origin:left top">EURUSD</div><div style="position:absolute;right:163.8px;top:107.14px;font-size:31px;line-height:31px;color:#f00;transform:scaleX(1.0);transform-origin:right top">1.16987</div><div style="position:absolute;right:12px;top:107.14px;font-size:31px;line-height:31px;color:#f00;transform:scaleX(1.0);transform-origin:right top">1.17054</div><div style="position:absolute;left:0;top:195.65px;width:526px;height:1px;background:#d8d8d8"></div><svg style="position:absolute;left:6px;top:159.15px" width="34" height="30" viewBox="0 0 34 30"><defs><radialGradient id="ga3" cx=".45" cy=".3" r=".8"><stop offset="0" stop-color="#ffc8a0"/><stop offset=".35" stop-color="#ff6a20"/><stop offset="1" stop-color="#c83008"/></radialGradient></defs><path d="M16 27 l14 -14 -1 2" stroke="#d8d8d8" stroke-width="2" fill="none"/><path d="M9.5 4.5 q0 -2.5 3 -2.5 h6.5 q3 0 3 2.5 v7 h7.5 l-13.4 13.8 -13.4 -13.8 h6.8 z" fill="url(#ga3)" stroke="#b03008" stroke-width="1"/></svg><div style="position:absolute;left:48px;top:156.19px;font-size:31px;line-height:31px;color:#000;transform:scaleX(0.93);transform-origin:left top">USDJPY</div><div style="position:absolute;right:163.8px;top:156.19px;font-size:31px;line-height:31px;color:#f00;transform:scaleX(1.0);transform-origin:right top">149.501</div><div style="position:absolute;right:12px;top:156.19px;font-size:31px;line-height:31px;color:#f00;transform:scaleX(1.0);transform-origin:right top">149.528</div><div style="position:absolute;left:0;top:244.70px;width:526px;height:1px;background:#d8d8d8"></div><svg style="position:absolute;left:6px;top:208.20px" width="34" height="30" viewBox="0 0 34 30"><defs><radialGradient id="ga4" cx=".45" cy=".3" r=".8"><stop offset="0" stop-color="#ffc8a0"/><stop offset=".35" stop-color="#ff6a20"/><stop offset="1" stop-color="#c83008"/></radialGradient></defs><path d="M16 27 l14 -14 -1 2" stroke="#d8d8d8" stroke-width="2" fill="none"/><path d="M9.5 4.5 q0 -2.5 3 -2.5 h6.5 q3 0 3 2.5 v7 h7.5 l-13.4 13.8 -13.4 -13.8 h6.8 z" fill="url(#ga4)" stroke="#b03008" stroke-width="1"/></svg><div style="position:absolute;left:48px;top:205.24px;font-size:31px;line-height:31px;color:#000;transform:scaleX(0.93);transform-origin:left top">USDCAD</div><div style="position:absolute;right:163.8px;top:205.24px;font-size:31px;line-height:31px;color:#f00;transform:scaleX(1.0);transform-origin:right top">1.39390</div><div style="position:absolute;right:12px;top:205.24px;font-size:31px;line-height:31px;color:#f00;transform:scaleX(1.0);transform-origin:right top">1.39462</div><div style="position:absolute;left:0;top:293.75px;width:526px;height:1px;background:#d8d8d8"></div><svg style="position:absolute;left:6px;top:257.25px" width="34" height="30" viewBox="0 0 34 30"><defs><radialGradient id="ga5" cx=".45" cy=".3" r=".8"><stop offset="0" stop-color="#ffc8a0"/><stop offset=".35" stop-color="#ff6a20"/><stop offset="1" stop-color="#c83008"/></radialGradient></defs><path d="M16 27 l14 -14 -1 2" stroke="#d8d8d8" stroke-width="2" fill="none"/><path d="M9.5 4.5 q0 -2.5 3 -2.5 h6.5 q3 0 3 2.5 v7 h7.5 l-13.4 13.8 -13.4 -13.8 h6.8 z" fill="url(#ga5)" stroke="#b03008" stroke-width="1"/></svg><div style="position:absolute;left:48px;top:254.29px;font-size:31px;line-height:31px;color:#000;transform:scaleX(0.93);transform-origin:left top">AUDUSD</div><div style="position:absolute;right:163.8px;top:254.29px;font-size:31px;line-height:31px;color:#f00;transform:scaleX(1.0);transform-origin:right top">0.65440</div><div style="position:absolute;right:12px;top:254.29px;font-size:31px;line-height:31px;color:#f00;transform:scaleX(1.0);transform-origin:right top">0.65503</div><div style="position:absolute;left:0;top:342.80px;width:526px;height:1px;background:#d8d8d8"></div><svg style="position:absolute;left:6px;top:306.30px" width="34" height="30" viewBox="0 0 34 30"><defs><radialGradient id="ga6" cx=".45" cy=".3" r=".8"><stop offset="0" stop-color="#ffc8a0"/><stop offset=".35" stop-color="#ff6a20"/><stop offset="1" stop-color="#c83008"/></radialGradient></defs><path d="M16 27 l14 -14 -1 2" stroke="#d8d8d8" stroke-width="2" fill="none"/><path d="M9.5 4.5 q0 -2.5 3 -2.5 h6.5 q3 0 3 2.5 v7 h7.5 l-13.4 13.8 -13.4 -13.8 h6.8 z" fill="url(#ga6)" stroke="#b03008" stroke-width="1"/></svg><div style="position:absolute;left:48px;top:303.34px;font-size:31px;line-height:31px;color:#000;transform:scaleX(0.93);transform-origin:left top">EURGBP</div><div style="position:absolute;right:163.8px;top:303.34px;font-size:31px;line-height:31px;color:#f00;transform:scaleX(1.0);transform-origin:right top">0.87303</div><div style="position:absolute;right:12px;top:303.34px;font-size:31px;line-height:31px;color:#f00;transform:scaleX(1.0);transform-origin:right top">0.87357</div><div style="position:absolute;left:0;top:391.85px;width:526px;height:1px;background:#d8d8d8"></div><svg style="position:absolute;left:6px;top:355.35px" width="34" height="30" viewBox="0 0 34 30"><defs><radialGradient id="ga7" cx=".45" cy=".3" r=".8"><stop offset="0" stop-color="#ffc8a0"/><stop offset=".35" stop-color="#ff6a20"/><stop offset="1" stop-color="#c83008"/></radialGradient></defs><path d="M16 27 l14 -14 -1 2" stroke="#d8d8d8" stroke-width="2" fill="none"/><path d="M9.5 4.5 q0 -2.5 3 -2.5 h6.5 q3 0 3 2.5 v7 h7.5 l-13.4 13.8 -13.4 -13.8 h6.8 z" fill="url(#ga7)" stroke="#b03008" stroke-width="1"/></svg><div style="position:absolute;left:48px;top:352.39px;font-size:31px;line-height:31px;color:#000;transform:scaleX(0.93);transform-origin:left top">EURAUD</div><div style="position:absolute;right:163.8px;top:352.39px;font-size:31px;line-height:31px;color:#f00;transform:scaleX(1.0);transform-origin:right top">1.78635</div><div style="position:absolute;right:12px;top:352.39px;font-size:31px;line-height:31px;color:#f00;transform:scaleX(1.0);transform-origin:right top">1.78851</div><div style="position:absolute;left:0;top:440.90px;width:526px;height:1px;background:#d8d8d8"></div><svg style="position:absolute;left:6px;top:404.40px" width="34" height="30" viewBox="0 0 34 30"><defs><radialGradient id="ga8" cx=".45" cy=".3" r=".8"><stop offset="0" stop-color="#ffc8a0"/><stop offset=".35" stop-color="#ff6a20"/><stop offset="1" stop-color="#c83008"/></radialGradient></defs><path d="M16 27 l14 -14 -1 2" stroke="#d8d8d8" stroke-width="2" fill="none"/><path d="M9.5 4.5 q0 -2.5 3 -2.5 h6.5 q3 0 3 2.5 v7 h7.5 l-13.4 13.8 -13.4 -13.8 h6.8 z" fill="url(#ga8)" stroke="#b03008" stroke-width="1"/></svg><div style="position:absolute;left:48px;top:401.44px;font-size:31px;line-height:31px;color:#000;transform:scaleX(0.93);transform-origin:left top">EURCHF</div><div style="position:absolute;right:163.8px;top:401.44px;font-size:31px;line-height:31px;color:#f00;transform:scaleX(1.0);transform-origin:right top">0.93333</div><div style="position:absolute;right:12px;top:401.44px;font-size:31px;line-height:31px;color:#f00;transform:scaleX(1.0);transform-origin:right top">0.93400</div><div style="position:absolute;left:0;top:489.95px;width:526px;height:1px;background:#d8d8d8"></div><svg style="position:absolute;left:6px;top:453.45px" width="34" height="30" viewBox="0 0 34 30"><defs><radialGradient id="ga9" cx=".45" cy=".3" r=".8"><stop offset="0" stop-color="#ffc8a0"/><stop offset=".35" stop-color="#ff6a20"/><stop offset="1" stop-color="#c83008"/></radialGradient></defs><path d="M16 27 l14 -14 -1 2" stroke="#d8d8d8" stroke-width="2" fill="none"/><path d="M9.5 4.5 q0 -2.5 3 -2.5 h6.5 q3 0 3 2.5 v7 h7.5 l-13.4 13.8 -13.4 -13.8 h6.8 z" fill="url(#ga9)" stroke="#b03008" stroke-width="1"/></svg><div style="position:absolute;left:48px;top:450.49px;font-size:31px;line-height:31px;color:#000;transform:scaleX(0.93);transform-origin:left top">EURJPY</div><div style="position:absolute;right:163.8px;top:450.49px;font-size:31px;line-height:31px;color:#f00;transform:scaleX(1.0);transform-origin:right top">174.911</div><div style="position:absolute;right:12px;top:450.49px;font-size:31px;line-height:31px;color:#f00;transform:scaleX(1.0);transform-origin:right top">175.000</div><div style="position:absolute;left:223.5px;top:0;width:1px;height:460px;background:#d8d8d8"></div><div style="position:absolute;left:374px;top:0;width:1px;height:460px;background:#d8d8d8"></div></div>
<svg style="position:absolute;left:530px;top:240px" width="40" height="30" viewBox="530 240 40 30"><path d="M541 256.2 L550 247.8 L559 256.2 L559 264 L550 255.7 L541 264 Z" fill="#606060"/></svg>
<div style="left:530.5px;top:279px;width:41px;height:158.5px;background:#cdcdcd"></div>
<svg style="position:absolute;left:530px;top:710px" width="40" height="30" viewBox="530 710 40 30"><path d="M541 716 L550 724.4 L559 716 L559 723.8 L550 732.2 L541 723.8 Z" fill="#606060"/></svg>
<div style="left:3px;top:745px;width:570px;height:1px;background:#000"></div>
<div style="left:6px;top:745px;width:170px;height:44px;background:#fff;border:1px solid #000;border-top:none"></div>
<div id="t24" style="left:32px;top:754.22px;font-size:29px;line-height:29px;color:#000;font-family:'Liberation Sans',sans-serif;transform:scaleX(1.0261);transform-origin:left top;"><b>交</b><b>易</b><b>品</b><b>种</b></div>
<div id="t25" style="left:201.7px;top:754.22px;font-size:29px;line-height:29px;color:#6d6d6d;font-family:'Liberation Sans',sans-serif;transform:scaleX(1.0476);transform-origin:left top;"><b>即</b><b>时</b><b>图</b></div>
<div style="left:316px;top:751px;width:1px;height:36px;background:#a0a0a0"></div>
<div style="left:3px;top:790.5px;width:570px;height:1px;background:#fff"></div>
<div style="left:0px;top:800px;width:582px;height:1px;background:#a0a0a0"></div>
<div style="left:0px;top:801px;width:582px;height:1px;background:#fff"></div>
<div style="left:3px;top:807px;width:532px;height:34px;background:linear-gradient(90deg,#98b3d3,#b9cde7)"></div>
<div id="t26" style="left:13.5px;top:809.44px;font-size:28px;line-height:28px;color:#111;font-family:'Liberation Sans',sans-serif;transform:scaleX(0.9455);transform-origin:left top;"><b>导</b><b>航</b></div>
<svg style="position:absolute;left:546.5px;top:815px;" width="16" height="16" viewBox="0 0 16 16"><path d="M2 2 L14 14 M14 2 L2 14" stroke="#000" stroke-width="2.4"/></svg>
<div style="left:3px;top:843px;width:570px;height:787px;background:#fff;border-top:1px solid #a8a8a8;border-left:1px solid #a8a8a8"></div>
<div style="left:30px;top:885px;width:1px;height:246px;background:repeating-linear-gradient(#a0a0a0 0 1px,transparent 1px 3px)"></div>
<div style="left:41px;top:910px;width:15px;height:1px;background:repeating-linear-gradient(90deg,#a0a0a0 0 1px,transparent 1px 3px)"></div>
<div style="left:78px;top:928px;width:1px;height:27px;background:repeating-linear-gradient(#a0a0a0 0 1px,transparent 1px 3px)"></div>
<div style="left:89px;top:955px;width:17px;height:1px;background:repeating-linear-gradient(90deg,#a0a0a0 0 1px,transparent 1px 3px)"></div>
<div style="left:126px;top:975px;width:1px;height:23px;background:repeating-linear-gradient(#a0a0a0 0 1px,transparent 1px 3px)"></div>
<div style="left:126px;top:998px;width:24px;height:1px;background:repeating-linear-gradient(90deg,#a0a0a0 0 1px,transparent 1px 3px)"></div>
<div style="left:41px;top:1043px;width:15px;height:1px;background:repeating-linear-gradient(90deg,#a0a0a0 0 1px,transparent 1px 3px)"></div>
<div style="left:41px;top:1087px;width:15px;height:1px;background:repeating-linear-gradient(90deg,#a0a0a0 0 1px,transparent 1px 3px)"></div>
<div style="left:41px;top:1131px;width:15px;height:1px;background:repeating-linear-gradient(90deg,#a0a0a0 0 1px,transparent 1px 3px)"></div>
<svg style="position:absolute;left:0;top:840px" width="250" height="320" viewBox="0 840 250 320"><defs>
<linearGradient id="nBox" x1="0" y1="0" x2="0" y2="1"><stop offset="0" stop-color="#ffffff"/><stop offset="1" stop-color="#dcdcdc"/></linearGradient>
<linearGradient id="nGr" x1="0" y1="0" x2="1" y2="1"><stop offset="0" stop-color="#8ef08e"/><stop offset="1" stop-color="#14a014"/></linearGradient>
<linearGradient id="nYe" x1="0" y1="0" x2="1" y2="1"><stop offset="0" stop-color="#fff0a0"/><stop offset=".6" stop-color="#e8c440"/><stop offset="1" stop-color="#b89020"/></linearGradient>
<linearGradient id="nOr" x1="0" y1="0" x2="0" y2="1"><stop offset="0" stop-color="#ffd24a"/><stop offset="1" stop-color="#e89a10"/></linearGradient>
<linearGradient id="nBl" x1="0" y1="0" x2="1" y2="0"><stop offset="0" stop-color="#1a78e0"/><stop offset=".3" stop-color="#40a8ff"/><stop offset="1" stop-color="#2090f0"/></linearGradient>
<linearGradient id="nHat" x1="0" y1="0" x2="0" y2="1"><stop offset="0" stop-color="#a8dcff"/><stop offset="1" stop-color="#3a90d0"/></linearGradient>
</defs><g transform="translate(19 900)"><rect x="0.5" y="0.5" width="21" height="20" rx="1.5" fill="url(#nBox)" stroke="#a0a0a0"/><path d="M5.5 10.5 h11" stroke="#2a48a8" stroke-width="2.2"/></g><g transform="translate(67 944.5)"><rect x="0.5" y="0.5" width="21" height="20" rx="1.5" fill="url(#nBox)" stroke="#a0a0a0"/><path d="M5.5 10.5 h11" stroke="#2a48a8" stroke-width="2.2"/></g><g transform="translate(19 1033)"><rect x="0.5" y="0.5" width="21" height="20" rx="1.5" fill="url(#nBox)" stroke="#a0a0a0"/><path d="M5.5 10.5 h11" stroke="#2a48a8" stroke-width="2.2"/><path d="M11 5 v11" stroke="#2a48a8" stroke-width="2.2"/></g><g transform="translate(19 1077)"><rect x="0.5" y="0.5" width="21" height="20" rx="1.5" fill="url(#nBox)" stroke="#a0a0a0"/><path d="M5.5 10.5 h11" stroke="#2a48a8" stroke-width="2.2"/><path d="M11 5 v11" stroke="#2a48a8" stroke-width="2.2"/></g><g transform="translate(19 1121)"><rect x="0.5" y="0.5" width="21" height="20" rx="1.5" fill="url(#nBox)" stroke="#a0a0a0"/><path d="M5.5 10.5 h11" stroke="#2a48a8" stroke-width="2.2"/><path d="M11 5 v11" stroke="#2a48a8" stroke-width="2.2"/></g><rect x="13" y="847.5" width="28.5" height="21" rx="1.5" fill="#fff" stroke="#5aa0e8" stroke-width="2.2"/><rect x="13" y="847.5" width="28.5" height="3" fill="#5aa0e8"/><path d="M18 859 l3 -4 3 4 3 -4 3 3" stroke="#7a9ae0" stroke-width="1.8" fill="none"/><rect x="20.5" y="860.5" width="26" height="21" rx="1.5" fill="#fff" stroke="#5aa0e8" stroke-width="2.2"/><rect x="20.5" y="860.5" width="26" height="3" fill="#5aa0e8"/><path d="M25 868 l4 6 4 -6 4 6 4 -3" stroke="#6a8ae8" stroke-width="1.8" fill="none" stroke-dasharray="2 1"/><path d="M52 870 q2 -5 0 -8" stroke="#2a9a2a" stroke-width="1.5" fill="none"/><path d="M56.5 924 q0 -19 9 -19 q9 0 9 19 z" fill="url(#nGr)" stroke="#108a10" stroke-width="1"/><circle cx="67" cy="898.5" r="8" fill="url(#nOr)" stroke="#c08010" stroke-width="1"/><path d="M69.5 928.5 q0 -21 14 -21 q14 0 14 21 z" fill="url(#nYe)" stroke="#a88a20" stroke-width="1.2"/><path d="M80 909 l9 18" stroke="#fff8c8" stroke-width="3"/><circle cx="82.5" cy="899.5" r="9.5" fill="url(#nYe)" stroke="#a88a20" stroke-width="1.2"/><path d="M111 939 l8 -4 h19 v34 l-8 6 h-19 z" fill="url(#nBl)" stroke="#1060c0" stroke-width="1.2"/><path d="M119 935 v34 l-8 6" stroke="#bfe4ff" stroke-width="1.2" fill="none"/><path d="M123 945 h11 M123 950 h11" stroke="#e0f2ff" stroke-width="2.2"/><circle cx="132" cy="964" r="2.2" fill="#f8e040"/><path d="M158 1017 q0 -20 15 -20 q15 0 15 20 z" fill="url(#nGr)" stroke="#108a10" stroke-width="1.2"/><path d="M169 998 l4 10 4 -10" fill="#e8f8e8"/><circle cx="173" cy="989" r="8.5" fill="url(#nOr)" stroke="#c08010" stroke-width="1"/><rect x="57.5" y="1023" width="35" height="35" rx="7" fill="url(#nYe)" stroke="#b09030" stroke-width="2"/><path d="M80 1030 q-5 -1 -6 5 l-4 16 q-1 5 -6 4 M68 1040 h10" stroke="#8a6a10" stroke-width="2.4" fill="none"/><path d="M59 1082 q18 8 36 -2 l-5 14 q-8 8 -24 4 z" fill="url(#nYe)" stroke="#b89020" stroke-width="1.4"/><ellipse cx="77" cy="1075" rx="19.5" ry="6.5" fill="url(#nHat)" stroke="#2a78c0" stroke-width="1.2"/><ellipse cx="76.5" cy="1069.5" rx="9.5" ry="7.5" fill="url(#nHat)"/><path d="M85 1095 l6.5 -6.5 6.5 6.5 -6.5 6.5 z" fill="url(#nYe)" stroke="#b09030" stroke-width="1.4"/><path d="M60 1113 h25 v5 h-4 v21 h4 v5 h-25 v-5 h4 v-21 h-4 z" fill="url(#nYe)" stroke="#b09030" stroke-width="1.4"/><path d="M69 1124 h2 M75 1124 h2 M69 1131 h2 M75 1131 h2" stroke="#8a7040" stroke-width="2"/><path d="M82 1141 l7 -7 7 7 -7 7 z" fill="url(#nYe)" stroke="#b09030" stroke-width="1.4"/></svg>
<div id="t27" style="left:59px;top:850.74px;font-size:31px;line-height:31px;color:#000;font-family:'Liberation Sans',sans-serif;transform:scaleX(1.0241);transform-origin:left top;">GMI MT4</div>
<div id="t28" style="left:106px;top:897.22px;font-size:29px;line-height:29px;color:#000;font-family:'Liberation Sans',sans-serif;transform:scaleX(1.0364);transform-origin:left top;"><b>账</b><b>户</b></div>
<div id="t29" style="left:154.7px;top:938.64px;font-size:31px;line-height:31px;color:#000;font-family:'Liberation Sans',sans-serif;transform:scaleX(1.0500);transform-origin:left top;">GMI-Demo03</div>
<div id="t30" style="left:203px;top:983.04px;font-size:31px;line-height:31px;color:#000;font-family:'Liberation Sans',sans-serif;transform:scaleX(1.0419);transform-origin:left top;">2134635574: fdfa fadfa</div>
<div id="t31" style="left:106.4px;top:1029.42px;font-size:29px;line-height:29px;color:#000;font-family:'Liberation Sans',sans-serif;transform:scaleX(1.0224);transform-origin:left top;"><b>技</b><b>术</b><b>指</b><b>标</b></div>
<div style="left:104px;top:1065px;width:102px;height:44px;background:#0078d7;border:1px dotted #222"></div>
<div id="t32" style="left:107px;top:1073.42px;font-size:29px;line-height:29px;color:#fff;font-family:'Liberation Sans',sans-serif;transform:scaleX(1.0358);transform-origin:left top;">EA<b>交</b><b>易</b></div>
<div id="t33" style="left:106px;top:1117.42px;font-size:29px;line-height:29px;color:#000;font-family:'Liberation Sans',sans-serif;transform:scaleX(1.0351);transform-origin:left top;"><b>脚</b><b>本</b></div>
<div style="left:3px;top:1630px;width:570px;height:1px;background:#000"></div>
<div style="left:6.7px;top:1630px;width:109px;height:45px;background:#fff;border:1px solid #000;border-top:none"></div>
<div id="t34" style="left:32.7px;top:1639.22px;font-size:29px;line-height:29px;color:#000;font-family:'Liberation Sans',sans-serif;transform:scaleX(1.0545);transform-origin:left top;"><b>常</b><b>用</b></div>
<div id="t35" style="left:141px;top:1639.22px;font-size:29px;line-height:29px;color:#6d6d6d;font-family:'Liberation Sans',sans-serif;transform:scaleX(1.0588);transform-origin:left top;"><b>收</b><b>藏</b><b>夹</b></div>
<div style="left:256px;top:1636px;width:1px;height:36px;background:#a0a0a0"></div>
<div style="left:573px;top:843px;width:1px;height:833px;background:#fff"></div>
<div style="left:3px;top:1676px;width:570px;height:1px;background:#fff"></div>
<div style="left:0px;top:1686px;width:582px;height:1px;background:#a0a0a0"></div>
<div style="left:582px;top:193px;width:2208px;height:1441px;background:#000"></div>
<div style="left:582px;top:193px;width:2px;height:1441px;background:#8a8a8a"></div>
<div style="left:582px;top:193px;width:2208px;height:1.5px;background:#8a8a8a"></div>
<div style="left:586px;top:196px;width:2091px;height:1px;background:#fff"></div>
<div style="left:586px;top:196px;width:1px;height:1400px;background:#fff"></div>
<div style="left:2676px;top:196px;width:1px;height:1400px;background:#fff"></div>
<div style="left:586px;top:1595px;width:2091px;height:1px;background:#fff"></div>
<svg style="position:absolute;left:589px;top:206px;" width="20" height="11" viewBox="0 0 20 11"><path d="M0.8 1 H18.5 L9.6 10 Z" fill="#fff"/></svg>
<div id="t36" style="left:619px;top:203.32px;font-size:23px;line-height:23px;color:#fff;font-family:'Liberation Sans',sans-serif;transform:scaleX(1.0000);transform-origin:left top;white-space:pre">GBPUSD,M15  1.34029 1.34051 1.33917 1.33998</div>
<svg style="position:absolute;left:2369px;top:197px;" width="27" height="14" viewBox="0 0 27 14"><path d="M0 0 H26 L13 13 Z" fill="#8898a8"/></svg>
<div style="left:2677px;top:211.8px;width:3px;height:1px;background:#fff"></div>
<div id="t37" style="left:2685.5px;top:202.2px;font-size:22.5px;line-height:22.5px;color:#fff;font-family:'Liberation Sans',sans-serif;transform:scaleX(1.0399);transform-origin:left top;">1.34170</div>
<div style="left:2677px;top:312.5px;width:3px;height:1px;background:#fff"></div>
<div id="t38" style="left:2685.5px;top:302.9px;font-size:22.5px;line-height:22.5px;color:#fff;font-family:'Liberation Sans',sans-serif;transform:scaleX(1.0399);transform-origin:left top;">1.34100</div>
<div style="left:2677px;top:413.2px;width:3px;height:1px;background:#fff"></div>
<div id="t39" style="left:2685.5px;top:403.6px;font-size:22.5px;line-height:22.5px;color:#fff;font-family:'Liberation Sans',sans-serif;transform:scaleX(1.0399);transform-origin:left top;">1.34030</div>
<div style="left:2677px;top:513.9px;width:3px;height:1px;background:#fff"></div>
<div id="t40" style="left:2685.5px;top:504.3px;font-size:22.5px;line-height:22.5px;color:#fff;font-family:'Liberation Sans',sans-serif;transform:scaleX(1.0399);transform-origin:left top;">1.33960</div>
<div style="left:2677px;top:614.6px;width:3px;height:1px;background:#fff"></div>
<div id="t41" style="left:2685.5px;top:605px;font-size:22.5px;line-height:22.5px;color:#fff;font-family:'Liberation Sans',sans-serif;transform:scaleX(1.0399);transform-origin:left top;">1.33890</div>
<div style="left:2677px;top:715.3px;width:3px;height:1px;background:#fff"></div>
<div id="t42" style="left:2685.5px;top:705.7px;font-size:22.5px;line-height:22.5px;color:#fff;font-family:'Liberation Sans',sans-serif;transform:scaleX(1.0399);transform-origin:left top;">1.33820</div>
<div style="left:2677px;top:816px;width:3px;height:1px;background:#fff"></div>
<div id="t43" style="left:2685.5px;top:806.4px;font-size:22.5px;line-height:22.5px;color:#fff;font-family:'Liberation Sans',sans-serif;transform:scaleX(1.0399);transform-origin:left top;">1.33750</div>
<div style="left:2677px;top:916.7px;width:3px;height:1px;background:#fff"></div>
<div id="t44" style="left:2685.5px;top:907.1px;font-size:22.5px;line-height:22.5px;color:#fff;font-family:'Liberation Sans',sans-serif;transform:scaleX(1.0399);transform-origin:left top;">1.33680</div>
<div style="left:2677px;top:1017.4px;width:3px;height:1px;background:#fff"></div>
<div id="t45" style="left:2685.5px;top:1007.8px;font-size:22.5px;line-height:22.5px;color:#fff;font-family:'Liberation Sans',sans-serif;transform:scaleX(1.0399);transform-origin:left top;">1.33610</div>
<div style="left:2677px;top:1118.1px;width:3px;height:1px;background:#fff"></div>
<div id="t46" style="left:2685.5px;top:1108.5px;font-size:22.5px;line-height:22.5px;color:#fff;font-family:'Liberation Sans',sans-serif;transform:scaleX(1.0399);transform-origin:left top;">1.33540</div>
<div style="left:2677px;top:1218.8px;width:3px;height:1px;background:#fff"></div>
<div id="t47" style="left:2685.5px;top:1209.2px;font-size:22.5px;line-height:22.5px;color:#fff;font-family:'Liberation Sans',sans-serif;transform:scaleX(1.0399);transform-origin:left top;">1.33470</div>
<div style="left:2677px;top:1319.5px;width:3px;height:1px;background:#fff"></div>
<div id="t48" style="left:2685.5px;top:1309.9px;font-size:22.5px;line-height:22.5px;color:#fff;font-family:'Liberation Sans',sans-serif;transform:scaleX(1.0399);transform-origin:left top;">1.33400</div>
<div style="left:2677px;top:1420.2px;width:3px;height:1px;background:#fff"></div>
<div id="t49" style="left:2685.5px;top:1410.6px;font-size:22.5px;line-height:22.5px;color:#fff;font-family:'Liberation Sans',sans-serif;transform:scaleX(1.0399);transform-origin:left top;">1.33330</div>
<div style="left:2677px;top:1520.9px;width:3px;height:1px;background:#fff"></div>
<div id="t50" style="left:2685.5px;top:1511.3px;font-size:22.5px;line-height:22.5px;color:#fff;font-family:'Liberation Sans',sans-serif;transform:scaleX(1.0399);transform-origin:left top;">1.33260</div>
<div style="left:2677px;top:460px;width:3px;height:1px;background:#fff"></div>
<div style="left:2678px;top:446px;width:101px;height:28px;background:#fff"></div>
<div id="t51" style="left:2685.5px;top:449.9px;font-size:22.5px;line-height:22.5px;color:#000;font-family:'Liberation Sans',sans-serif;transform:scaleX(1.0399);transform-origin:left top;">1.33998</div>
<div style="left:586.8px;top:1595px;width:1px;height:4px;background:#fff"></div>
<div id="t52" style="left:585.3px;top:1602.4px;font-size:22.5px;line-height:22.5px;color:#fff;font-family:'Liberation Sans',sans-serif;transform:scaleX(1.0150);transform-origin:left top;">25 Sep 2025</div>
<div style="left:778.8px;top:1595px;width:1px;height:4px;background:#fff"></div>
<div id="t53" style="left:777.3px;top:1602.4px;font-size:22.5px;line-height:22.5px;color:#fff;font-family:'Liberation Sans',sans-serif;transform:scaleX(1.0351);transform-origin:left top;">25 Sep 23:15</div>
<div style="left:970.8px;top:1595px;width:1px;height:4px;background:#fff"></div>
<div id="t54" style="left:969.3px;top:1602.4px;font-size:22.5px;line-height:22.5px;color:#fff;font-family:'Liberation Sans',sans-serif;transform:scaleX(1.0351);transform-origin:left top;">26 Sep 02:15</div>
<div style="left:1162.8px;top:1595px;width:1px;height:4px;background:#fff"></div>
<div id="t55" style="left:1161.3px;top:1602.4px;font-size:22.5px;line-height:22.5px;color:#fff;font-family:'Liberation Sans',sans-serif;transform:scaleX(1.0351);transform-origin:left top;">26 Sep 05:15</div>
<div style="left:1354.8px;top:1595px;width:1px;height:4px;background:#fff"></div>
<div id="t56" style="left:1353.3px;top:1602.4px;font-size:22.5px;line-height:22.5px;color:#fff;font-family:'Liberation Sans',sans-serif;transform:scaleX(1.0351);transform-origin:left top;">26 Sep 08:15</div>
<div style="left:1546.8px;top:1595px;width:1px;height:4px;background:#fff"></div>
<div id="t57" style="left:1545.3px;top:1602.4px;font-size:22.5px;line-height:22.5px;color:#fff;font-family:'Liberation Sans',sans-serif;transform:scaleX(1.0483);transform-origin:left top;">26 Sep 11:15</div>
<div style="left:1738.8px;top:1595px;width:1px;height:4px;background:#fff"></div>
<div id="t58" style="left:1737.3px;top:1602.4px;font-size:22.5px;line-height:22.5px;color:#fff;font-family:'Liberation Sans',sans-serif;transform:scaleX(1.0351);transform-origin:left top;">26 Sep 14:15</div>
<div style="left:1930.8px;top:1595px;width:1px;height:4px;background:#fff"></div>
<div id="t59" style="left:1929.3px;top:1602.4px;font-size:22.5px;line-height:22.5px;color:#fff;font-family:'Liberation Sans',sans-serif;transform:scaleX(1.0351);transform-origin:left top;">26 Sep 17:15</div>
<div style="left:2122.8px;top:1595px;width:1px;height:4px;background:#fff"></div>
<div id="t60" style="left:2121.3px;top:1602.4px;font-size:22.5px;line-height:22.5px;color:#fff;font-family:'Liberation Sans',sans-serif;transform:scaleX(1.0351);transform-origin:left top;">26 Sep 20:15</div>
<div style="left:2314.8px;top:1595px;width:1px;height:4px;background:#fff"></div>
<div id="t61" style="left:2313.3px;top:1602.4px;font-size:22.5px;line-height:22.5px;color:#fff;font-family:'Liberation Sans',sans-serif;transform:scaleX(1.0351);transform-origin:left top;">26 Sep 23:15</div>
<div style="left:637.3px;top:235.3px;width:877.7px;height:1202px;border-top:2px solid #7a7a7a;border-left:2px solid #7a7a7a;border-right:2px solid #e6e6e6;border-bottom:2px solid #e6e6e6"></div>
<div style="left:642px;top:240px;width:865px;height:74.4px;background:#00bfff"></div>
<div id="t62" style="left:685px;top:255px;font-size:58px;line-height:58px;color:#000;font-family:'Liberation Serif',serif;"><i style="transform:scaleX(0.692);transform-origin:0 0">w</i><i style="transform:scaleX(0.692);transform-origin:0 0">w</i><i style="transform:scaleX(0.692);transform-origin:0 0">w</i><i>.</i><i>e</i><i>a</i><i style="transform:scaleX(0.643);transform-origin:0 0">m</i><i>t</i><i>4</i><i>.</i><i>c</i><i>o</i><i style="transform:scaleX(0.643);transform-origin:0 0">m</i></div>
<div style="left:1106px;top:242.8px;width:98px;height:67.9px;background:#808080"></div>
<div style="left:1206px;top:242.8px;width:198px;height:67.9px;background:#808080"></div>
<div style="left:1406px;top:242.8px;width:98.5px;height:67.9px;background:#808080"></div>
<div id="t63" style="left:1137px;top:258.22px;font-size:38px;line-height:38px;color:#fff;font-family:'Liberation Serif',serif;"><b>空</b></div>
<div id="t64" style="left:1221.4px;top:255.96px;font-size:41.5px;line-height:41.5px;color:#fff;font-family:'Liberation Sans',sans-serif;transform:scaleX(0.9749);transform-origin:left top;">EURUSD</div>
<div id="t65" style="left:1437px;top:258.22px;font-size:38px;line-height:38px;color:#fff;font-family:'Liberation Serif',serif;"><b>空</b></div>
<div style="left:642px;top:322.4px;width:213px;height:74.6px;background:#00bfff"></div>
<div id="t66" style="left:662.5px;top:340.32px;font-size:44px;line-height:44px;color:#fff;font-family:'Liberation Sans',sans-serif;transform:scaleX(0.9771);transform-origin:left top;"><b>停</b><b>止</b><b>跟</b><b>单</b></div>
<div style="left:642px;top:405px;width:213px;height:75px;background:#00bfff"></div>
<div id="t67" style="left:662.5px;top:422.72px;font-size:44px;line-height:44px;color:#fff;font-family:'Liberation Sans',sans-serif;transform:scaleX(0.9771);transform-origin:left top;"><b>补</b><b>仓</b><b>未</b><b>跟</b></div>
<div style="left:860px;top:322.4px;width:213px;height:74.6px;background:#00bfff"></div>
<div id="t68" style="left:880.5px;top:340.32px;font-size:44px;line-height:44px;color:#fff;font-family:'Liberation Sans',sans-serif;transform:scaleX(0.9884);transform-origin:left top;"><b>账</b><b>户</b><b>全</b><b>平</b></div>
<div style="left:860px;top:405px;width:213px;height:75px;background:#00bfff"></div>
<div id="t69" style="left:880.5px;top:422.72px;font-size:44px;line-height:44px;color:#fff;font-family:'Liberation Sans',sans-serif;transform:scaleX(0.9771);transform-origin:left top;"><b>补</b><b>仓</b><b>已</b><b>平</b></div>
<div style="left:1077px;top:322.4px;width:213px;height:74.6px;background:#00bfff"></div>
<div id="t70" style="left:1097.5px;top:340.32px;font-size:44px;line-height:44px;color:#fff;font-family:'Liberation Sans',sans-serif;transform:scaleX(0.9828);transform-origin:left top;"><b>跟</b><b>单</b><b>全</b><b>平</b></div>
<div style="left:1077px;top:405px;width:213px;height:75px;background:#ebebeb;border:1.5px solid;border-color:#6a6a6a #c8c8c8 #c8c8c8 #6a6a6a"></div>
<div id="t71" style="left:1097.5px;top:422.72px;font-size:44px;line-height:44px;color:#00bfff;font-family:'Liberation Sans',sans-serif;transform:scaleX(0.9828);transform-origin:left top;"><b>跟</b><b>单</b><b>数</b><b>据</b></div>
<div style="left:1295px;top:322.4px;width:213px;height:74.6px;background:#00bfff"></div>
<div id="t72" style="left:1315.5px;top:340.32px;font-size:44px;line-height:44px;color:#fff;font-family:'Liberation Sans',sans-serif;transform:scaleX(0.9828);transform-origin:left top;"><b>退</b><b>出</b><b>跟</b><b>单</b></div>
<div style="left:1295px;top:405px;width:213px;height:75px;background:#ebebeb;border:1.5px solid;border-color:#6a6a6a #c8c8c8 #c8c8c8 #6a6a6a"></div>
<div id="t73" style="left:1315.5px;top:422.72px;font-size:44px;line-height:44px;color:#00bfff;font-family:'Liberation Sans',sans-serif;transform:scaleX(0.9942);transform-origin:left top;"><b>喊</b><b>跟</b><b>对</b><b>照</b></div>
<div id="t74" style="left:663.7px;top:503.23px;font-size:37px;line-height:37px;color:#ffa500;font-family:'Liberation Serif',serif;"><b>喊</b><b>单</b><b>端</b></div>
<div id="t75" style="left:1088px;top:503.23px;font-size:37px;line-height:37px;color:#008b8b;font-family:'Liberation Serif',serif;"><b>跟</b><b>单</b><b>端</b></div>
<div id="t76" style="left:663.7px;top:553.23px;font-size:37px;line-height:37px;color:#ffa500;font-family:'Liberation Serif',serif;"><b>版</b><b>本</b><i style="width:1em;text-align:left;padding-left:.05em">:</i><i style="transform:scaleX(0.562);transform-origin:0 0">M</i><i style="transform:scaleX(0.819);transform-origin:0 0">T</i><i>4</i></div>
<div id="t77" style="left:1088px;top:553.23px;font-size:37px;line-height:37px;color:#008b8b;font-family:'Liberation Serif',serif;"><b>版</b><b>本</b><i style="width:1em;text-align:left;padding-left:.05em">:</i><i style="transform:scaleX(0.562);transform-origin:0 0">M</i><i style="transform:scaleX(0.819);transform-origin:0 0">T</i><i>4</i></div>
<div id="t78" style="left:663.7px;top:603.23px;font-size:37px;line-height:37px;color:#ffa500;font-family:'Liberation Serif',serif;"><b>账</b><b>号</b><i style="width:1em;text-align:left;padding-left:.05em">:</i><i>2</i><i>1</i><i>3</i><i>4</i><i>6</i><i>4</i><i>4</i><i>0</i><i>4</i><i>4</i></div>
<div id="t79" style="left:1088px;top:603.23px;font-size:37px;line-height:37px;color:#008b8b;font-family:'Liberation Serif',serif;"><b>账</b><b>号</b><i style="width:1em;text-align:left;padding-left:.05em">:</i><i>2</i><i>1</i><i>3</i><i>4</i><i>6</i><i>3</i><i>5</i><i>5</i><i>7</i><i>4</i></div>
<div id="t80" style="left:663.7px;top:653.23px;font-size:37px;line-height:37px;color:#ffa500;font-family:'Liberation Serif',serif;"><b>类</b><b>型</b><i style="width:1em;text-align:left;padding-left:.05em">:</i><i style="transform:scaleX(0.692);transform-origin:0 0">D</i><i>e</i><i style="transform:scaleX(0.643);transform-origin:0 0">m</i><i>o</i><i>0</i><i>3</i></div>
<div id="t81" style="left:1088px;top:653.23px;font-size:37px;line-height:37px;color:#008b8b;font-family:'Liberation Serif',serif;"><b>类</b><b>型</b><i style="width:1em;text-align:left;padding-left:.05em">:</i><i style="transform:scaleX(0.692);transform-origin:0 0">D</i><i>e</i><i style="transform:scaleX(0.643);transform-origin:0 0">m</i><i>o</i><i>0</i><i>3</i></div>
<div id="t82" style="left:663.7px;top:703.23px;font-size:37px;line-height:37px;color:#ffa500;font-family:'Liberation Serif',serif;"><b>余</b><b>额</b><i style="width:1em;text-align:left;padding-left:.05em">:</i><i>9</i><i>6</i><i>7</i><i>7</i><i>.</i><i>4</i><i>2</i></div>
<div id="t83" style="left:1088px;top:703.23px;font-size:37px;line-height:37px;color:#008b8b;font-family:'Liberation Serif',serif;"><b>余</b><b>额</b><i style="width:1em;text-align:left;padding-left:.05em">:</i><i>7</i><i>5</i><i>7</i><i>6</i><i>.</i><i>6</i><i>6</i></div>
<div id="t84" style="left:663.7px;top:753.23px;font-size:37px;line-height:37px;color:#ffa500;font-family:'Liberation Serif',serif;"><b>净</b><b>值</b><i style="width:1em;text-align:left;padding-left:.05em">:</i><i>9</i><i>6</i><i>8</i><i>0</i><i>.</i><i>4</i><i>0</i></div>
<div id="t85" style="left:1088px;top:753.23px;font-size:37px;line-height:37px;color:#008b8b;font-family:'Liberation Serif',serif;"><b>净</b><b>值</b><i style="width:1em;text-align:left;padding-left:.05em">:</i><i>7</i><i>5</i><i>7</i><i>8</i><i>.</i><i>9</i><i>4</i></div>
<div id="t86" style="left:663.7px;top:803.23px;font-size:37px;line-height:37px;color:#ffa500;font-family:'Liberation Serif',serif;"><b>利</b><b>润</b><i style="width:1em;text-align:left;padding-left:.05em">:</i><i>2</i><i>.</i><i>9</i><i>8</i></div>
<div id="t87" style="left:1088px;top:803.23px;font-size:37px;line-height:37px;color:#008b8b;font-family:'Liberation Serif',serif;"><b>利</b><b>润</b><i style="width:1em;text-align:left;padding-left:.05em">:</i><i>2</i><i>.</i><i>2</i><i>8</i></div>
<div id="t88" style="left:663.7px;top:853.23px;font-size:37px;line-height:37px;color:#ffa500;font-family:'Liberation Serif',serif;"><b>单</b><b>数</b><i style="width:1em;text-align:left;padding-left:.05em">:</i><i>3</i></div>
<div id="t89" style="left:1088px;top:853.23px;font-size:37px;line-height:37px;color:#008b8b;font-family:'Liberation Serif',serif;"><b>单</b><b>数</b><i style="width:1em;text-align:left;padding-left:.05em">:</i><i>3</i></div>
<div id="t90" style="left:663.7px;top:903.23px;font-size:37px;line-height:37px;color:#ffa500;font-family:'Liberation Serif',serif;"><b>手</b><b>数</b><i style="width:1em;text-align:left;padding-left:.05em">:</i><i>0</i><i>.</i><i>0</i><i>0</i></div>
<div id="t91" style="left:1088px;top:903.23px;font-size:37px;line-height:37px;color:#008b8b;font-family:'Liberation Serif',serif;"><b>手</b><b>数</b><i style="width:1em;text-align:left;padding-left:.05em">:</i><i>0</i><i>.</i><i>0</i><i>3</i></div>
<div id="t92" style="left:663.7px;top:953.23px;font-size:37px;line-height:37px;color:#ffa500;font-family:'Liberation Serif',serif;"><b>后</b><b>缀</b><i style="width:1em;text-align:left;padding-left:.05em">:</i></div>
<div id="t93" style="left:1088px;top:953.23px;font-size:37px;line-height:37px;color:#008b8b;font-family:'Liberation Serif',serif;"><b>后</b><b>缀</b><i style="width:1em;text-align:left;padding-left:.05em">:</i></div>
<div id="t94" style="left:663.7px;top:1003.23px;font-size:37px;line-height:37px;color:#ffa500;font-family:'Liberation Serif',serif;"><b>比</b><b>例</b><i style="width:1em;text-align:left;padding-left:.05em">:</i><i>4</i><i>1</i><i>4</i><i>3</i><i>2</i><i>.</i><i>9</i><i>7</i><i style="transform:scaleX(0.600);transform-origin:0 0">%</i></div>
<div id="t95" style="left:1088px;top:1003.23px;font-size:37px;line-height:37px;color:#008b8b;font-family:'Liberation Serif',serif;"><b>比</b><b>例</b><i style="width:1em;text-align:left;padding-left:.05em">:</i><i>3</i><i>2</i><i>4</i><i>3</i><i>8</i><i>.</i><i>5</i><i>4</i><i style="transform:scaleX(0.600);transform-origin:0 0">%</i></div>
<div id="t96" style="left:663.7px;top:1053.23px;font-size:37px;line-height:37px;color:#ffa500;font-family:'Liberation Serif',serif;"><b>时</b><b>间</b><i style="width:1em;text-align:left;padding-left:.05em">:</i><i>2</i><i>3</i><i>:</i><i>5</i><i>9</i><i>:</i><i>2</i><i>9</i></div>
<div id="t97" style="left:1088px;top:1053.23px;font-size:37px;line-height:37px;color:#008b8b;font-family:'Liberation Serif',serif;"><b>时</b><b>间</b><i style="width:1em;text-align:left;padding-left:.05em">:</i><i>2</i><i>3</i><i>:</i><i>5</i><i>9</i><i>:</i><i>2</i><i>9</i></div>
<div id="t98" style="left:663.7px;top:1103.23px;font-size:37px;line-height:37px;color:#ffa500;font-family:'Liberation Serif',serif;"><b>终</b><b>端</b><i style="transform:scaleX(0.819);transform-origin:0 0">E</i><i style="transform:scaleX(0.692);transform-origin:0 0">A</i><b>开</b><b>关</b><i style="width:1em;text-align:left;padding-left:.05em">:</i><i>t</i><i>r</i><i>u</i><i>e</i></div>
<div id="t99" style="left:1088px;top:1103.23px;font-size:37px;line-height:37px;color:#008b8b;font-family:'Liberation Serif',serif;"><b>终</b><b>端</b><i style="transform:scaleX(0.819);transform-origin:0 0">E</i><i style="transform:scaleX(0.692);transform-origin:0 0">A</i><b>开</b><b>关</b><i style="width:1em;text-align:left;padding-left:.05em">:</i><i>t</i><i>r</i><i>u</i><i>e</i></div>
<div id="t100" style="left:663.7px;top:1153.23px;font-size:37px;line-height:37px;color:#ffa500;font-family:'Liberation Serif',serif;"><b>属</b><b>性</b><i style="transform:scaleX(0.819);transform-origin:0 0">E</i><i style="transform:scaleX(0.692);transform-origin:0 0">A</i><b>开</b><b>关</b><i style="width:1em;text-align:left;padding-left:.05em">:</i><i>t</i><i>r</i><i>u</i><i>e</i></div>
<div id="t101" style="left:1088px;top:1153.23px;font-size:37px;line-height:37px;color:#008b8b;font-family:'Liberation Serif',serif;"><b>属</b><b>性</b><i style="transform:scaleX(0.819);transform-origin:0 0">E</i><i style="transform:scaleX(0.692);transform-origin:0 0">A</i><b>开</b><b>关</b><i style="width:1em;text-align:left;padding-left:.05em">:</i><i>t</i><i>r</i><i>u</i><i>e</i></div>
<div id="t102" style="left:663.7px;top:1203.23px;font-size:37px;line-height:37px;color:#ffa500;font-family:'Liberation Serif',serif;"><b>账</b><b>户</b><i style="transform:scaleX(0.819);transform-origin:0 0">E</i><i style="transform:scaleX(0.692);transform-origin:0 0">A</i><b>开</b><b>关</b><i style="width:1em;text-align:left;padding-left:.05em">:</i><i>t</i><i>r</i><i>u</i><i>e</i></div>
<div id="t103" style="left:1088px;top:1203.23px;font-size:37px;line-height:37px;color:#008b8b;font-family:'Liberation Serif',serif;"><b>账</b><b>户</b><i style="transform:scaleX(0.819);transform-origin:0 0">E</i><i style="transform:scaleX(0.692);transform-origin:0 0">A</i><b>开</b><b>关</b><i style="width:1em;text-align:left;padding-left:.05em">:</i><i>t</i><i>r</i><i>u</i><i>e</i></div>
<div id="t104" style="left:663.7px;top:1253.23px;font-size:37px;line-height:37px;color:#ffa500;font-family:'Liberation Serif',serif;"><b>运</b><b>行</b><i style="width:1em;text-align:left;padding-left:.05em">:</i><i>0</i><b>天</b><i>8</i><b>时</b><i>3</i><i>4</i><b>分</b><i>3</i><i>4</i><b>秒</b></div>
<div id="t105" style="left:1088px;top:1253.23px;font-size:37px;line-height:37px;color:#008b8b;font-family:'Liberation Serif',serif;"><b>运</b><b>行</b><i style="width:1em;text-align:left;padding-left:.05em">:</i><i>0</i><b>天</b><i>0</i><b>时</b><i>5</i><b>分</b><i>5</i><b>秒</b></div>
<div id="t106" style="left:666px;top:1313.9px;font-size:50px;line-height:50px;color:#b22222;font-family:'Liberation Serif',serif;"><b>正</b><b>式</b><b>版</b><b>使</b><b>用</b><b>期</b><b>限</b><i style="width:1em;text-align:left;padding-left:.05em">:</i><b>永</b><b>久</b><b>有</b><b>效</b></div>
<div id="t107" style="left:666px;top:1381.5px;font-size:50px;line-height:50px;color:#b8cbe4;font-family:'Liberation Serif',serif;"><b>千</b><b>诀</b><b>编</b><b>程</b><i>&nbsp;</i><i style="transform:scaleX(0.819);transform-origin:0 0">E</i><i style="transform:scaleX(0.692);transform-origin:0 0">A</i><b>代</b><b>写</b><i>&nbsp;</i><b>微</b><b>信</b><i style="width:1em;text-align:left;padding-left:.05em">:</i><i>3</i><i>7</i><i>2</i><i>1</i><i>2</i><i>7</i><i>2</i><i>6</i><i>6</i></div>
<div style="left:1527.5px;top:498px;width:399px;height:938px;border-top:2px solid #7a7a7a;border-left:2px solid #7a7a7a;border-right:2px solid #dcdcdc;border-bottom:2px solid #dcdcdc"></div>
<div id="t108" style="left:1618px;top:519.33px;font-size:37px;line-height:37px;color:#6495ed;font-family:'Liberation Serif',serif;"><b>跟</b><b>单</b><b>数</b><b>据</b><b>信</b><b>息</b></div>
<div style="left:1540.7px;top:584.5px;width:380px;height:2px;background:repeating-linear-gradient(90deg,#6495ed 0 16px,transparent 16px 19px)"></div>
<div style="left:1540.7px;top:784.5px;width:380px;height:2px;background:repeating-linear-gradient(90deg,#6495ed 0 16px,transparent 16px 19px)"></div>
<div style="left:1540.7px;top:984.5px;width:380px;height:2px;background:repeating-linear-gradient(90deg,#6495ed 0 16px,transparent 16px 19px)"></div>
<div style="left:1540.7px;top:1184.5px;width:380px;height:2px;background:repeating-linear-gradient(90deg,#6495ed 0 16px,transparent 16px 19px)"></div>
<div id="t109" style="left:1541.8px;top:619.63px;font-size:37px;line-height:37px;color:#6495ed;font-family:'Liberation Serif',serif;"><b>多</b><b>单</b><b>单</b><b>数</b><i style="width:1em;text-align:left;padding-left:.05em">:</i><i>2</i></div>
<div id="t110" style="left:1541.8px;top:669.63px;font-size:37px;line-height:37px;color:#6495ed;font-family:'Liberation Serif',serif;"><b>多</b><b>单</b><b>手</b><b>数</b><i style="width:1em;text-align:left;padding-left:.05em">:</i><i>0</i><i>.</i><i>0</i><i>2</i></div>
<div id="t111" style="left:1541.8px;top:719.63px;font-size:37px;line-height:37px;color:#6495ed;font-family:'Liberation Serif',serif;"><b>多</b><b>单</b><b>获</b><b>利</b><i style="width:1em;text-align:left;padding-left:.05em">:</i><i>1</i><i>.</i><i>8</i><i>0</i></div>
<div id="t112" style="left:1541.8px;top:819.63px;font-size:37px;line-height:37px;color:#6495ed;font-family:'Liberation Serif',serif;"><b>空</b><b>单</b><b>单</b><b>数</b><i style="width:1em;text-align:left;padding-left:.05em">:</i><i>1</i></div>
<div id="t113" style="left:1541.8px;top:869.63px;font-size:37px;line-height:37px;color:#6495ed;font-family:'Liberation Serif',serif;"><b>空</b><b>单</b><b>手</b><b>数</b><i style="width:1em;text-align:left;padding-left:.05em">:</i><i>0</i><i>.</i><i>0</i><i>1</i></div>
<div id="t114" style="left:1541.8px;top:919.63px;font-size:37px;line-height:37px;color:#6495ed;font-family:'Liberation Serif',serif;"><b>空</b><b>单</b><b>获</b><b>利</b><i style="width:1em;text-align:left;padding-left:.05em">:</i><i>0</i><i>.</i><i>4</i><i>8</i></div>
<div id="t115" style="left:1541.8px;top:1019.13px;font-size:37px;line-height:37px;color:#6495ed;font-family:'Liberation Serif',serif;"><b>整</b><b>体</b><b>单</b><b>数</b><i style="width:1em;text-align:left;padding-left:.05em">:</i><i>3</i></div>
<div id="t116" style="left:1541.8px;top:1069.43px;font-size:37px;line-height:37px;color:#6495ed;font-family:'Liberation Serif',serif;"><b>整</b><b>体</b><b>手</b><b>数</b><i style="width:1em;text-align:left;padding-left:.05em">:</i><i>0</i><i>.</i><i>0</i><i>3</i></div>
<div id="t117" style="left:1541.8px;top:1118.63px;font-size:37px;line-height:37px;color:#6495ed;font-family:'Liberation Serif',serif;"><b>整</b><b>体</b><b>获</b><b>利</b><i style="width:1em;text-align:left;padding-left:.05em">:</i><i>2</i><i>.</i><i>2</i><i>8</i></div>
<div id="t118" style="left:1541.8px;top:1219.63px;font-size:37px;line-height:37px;color:#6495ed;font-family:'Liberation Serif',serif;"><b>今</b><b>天</b><b>单</b><b>数</b><i style="width:1em;text-align:left;padding-left:.05em">:</i><i>0</i></div>
<div id="t119" style="left:1541.8px;top:1270.13px;font-size:37px;line-height:37px;color:#6495ed;font-family:'Liberation Serif',serif;"><b>今</b><b>天</b><b>盈</b><b>亏</b><i style="width:1em;text-align:left;padding-left:.05em">:</i><i>0</i><i>.</i><i>0</i><i>0</i></div>
<div id="t120" style="left:1541.8px;top:1319.13px;font-size:37px;line-height:37px;color:#6495ed;font-family:'Liberation Serif',serif;"><b>历</b><b>史</b><b>单</b><b>数</b><i style="width:1em;text-align:left;padding-left:.05em">:</i><i>0</i></div>
<div id="t121" style="left:1541.8px;top:1369.63px;font-size:37px;line-height:37px;color:#6495ed;font-family:'Liberation Serif',serif;"><b>历</b><b>史</b><b>盈</b><b>亏</b><i style="width:1em;text-align:left;padding-left:.05em">:</i><i>0</i><i>.</i><i>0</i><i>0</i></div>
<div id="t122" style="left:1593px;top:236.5px;font-size:81px;line-height:81px;color:#b0c4de;font-family:'Liberation Serif',serif;"><b>当</b><b>前</b><b>为</b><i>&nbsp;</i><b>对</b><b>冲</b></div>
<div id="t123" style="left:2494px;top:205.575px;font-size:22.5px;line-height:22.5px;color:#fff;font-family:'Liberation Serif',serif;"><b>千</b><b>诀</b><b>对</b><b>冲</b><b>跟</b><b>单</b></div>
<svg style="position:absolute;left:2640px;top:204px;" width="33" height="31" viewBox="0 0 33 31"><circle cx="16" cy="15" r="13.5" fill="none" stroke="#fff" stroke-width="2.2"/><circle cx="11" cy="11" r="1.8" fill="#fff"/><circle cx="21" cy="11" r="1.8" fill="#fff"/><path d="M8 17 q8 9 16 0" stroke="#fff" stroke-width="2.2" fill="none"/></svg>
<div id="t124" style="left:2443px;top:253.605px;font-size:39.5px;line-height:39.5px;color:#1e90ff;font-family:'Liberation Serif',serif;"><b>发</b><b>射</b><b>正</b><b>常</b></div>
<div style="left:2620px;top:255.2px;width:35px;height:35px;background:#f00;border-radius:50%"></div>
<div id="t125" style="left:2443px;top:303.605px;font-size:39.5px;line-height:39.5px;color:#1e90ff;font-family:'Liberation Serif',serif;"><b>跟</b><b>单</b><b>正</b><b>常</b></div>
<div style="left:2620px;top:305px;width:35px;height:35px;background:#f00;border-radius:50%"></div>
<div id="t126" style="left:2443px;top:353.605px;font-size:39.5px;line-height:39.5px;color:#1e90ff;font-family:'Liberation Serif',serif;"><b>喊</b><b>单</b><b>正</b><b>常</b></div>
<div style="left:2620px;top:354.8px;width:35px;height:35px;background:#f00;border-radius:50%"></div>
<div id="t127" style="left:2027.7px;top:1339.17px;font-size:33px;line-height:33px;color:#ff8c00;font-family:'Liberation Serif',serif;"><b>本</b><b>账</b><b>号</b></div>
<div id="t128" style="left:2352.4px;top:1339.17px;font-size:33px;line-height:33px;color:#ff8c00;font-family:'Liberation Serif',serif;"><b>对</b><b>冲</b><i style="width:1em;text-align:left;padding-left:.05em">:</i><i>2</i><i>1</i><i>3</i><i>4</i><i>6</i><i>4</i><i>4</i><i>0</i><i>4</i><i>4</i></div>
<div id="t129" style="left:2027.7px;top:1389.67px;font-size:33px;line-height:33px;color:#6495ed;font-family:'Liberation Serif',serif;"><b>利</b><b>润</b><i style="width:1em;text-align:left;padding-left:.05em">:</i><i>2</i><i>.</i><i>2</i><i>8</i></div>
<div id="t130" style="left:2352.4px;top:1389.67px;font-size:33px;line-height:33px;color:#6495ed;font-family:'Liberation Serif',serif;"><b>利</b><b>润</b><i style="width:1em;text-align:left;padding-left:.05em">:</i><i>2</i><i>.</i><i>9</i><i>8</i></div>
<div id="t131" style="left:2027.7px;top:1440.17px;font-size:33px;line-height:33px;color:#d2691e;font-family:'Liberation Serif',serif;"><i>1</i><i>-</i><b>多</b><b>单</b><i style="width:1em;text-align:left;padding-left:.05em">:</i><i>9</i><i>9</i><i>1</i><i>6</i><i>4</i><i>7</i><i>4</i><i>2</i></div>
<div id="t132" style="left:2352.4px;top:1440.17px;font-size:33px;line-height:33px;color:#b22222;font-family:'Liberation Serif',serif;"><b>已</b><b>跟</b><i style="width:1em;text-align:left;padding-left:.05em">:</i><i>9</i><i>9</i><i>1</i><i>6</i><i>4</i><i>7</i><i>4</i><i>9</i></div>
<div id="t133" style="left:2027.7px;top:1490.67px;font-size:33px;line-height:33px;color:#b22222;font-family:'Liberation Serif',serif;"><i>2</i><i>-</i><b>已</b><b>跟</b><i style="width:1em;text-align:left;padding-left:.05em">:</i><i>9</i><i>9</i><i>1</i><i>7</i><i>0</i><i>8</i><i>3</i><i>0</i></div>
<div id="t134" style="left:2352.4px;top:1490.67px;font-size:33px;line-height:33px;color:#d2691e;font-family:'Liberation Serif',serif;"><b>多</b><b>单</b><i style="width:1em;text-align:left;padding-left:.05em">:</i><i>9</i><i>9</i><i>1</i><i>7</i><i>0</i><i>8</i><i>2</i><i>6</i></div>
<div id="t135" style="left:2027.7px;top:1541.17px;font-size:33px;line-height:33px;color:#b22222;font-family:'Liberation Serif',serif;"><i>3</i><i>-</i><b>已</b><b>跟</b><i style="width:1em;text-align:left;padding-left:.05em">:</i><i>9</i><i>9</i><i>2</i><i>1</i><i>0</i><i>8</i><i>5</i><i>6</i></div>
<div id="t136" style="left:2352.4px;top:1541.17px;font-size:33px;line-height:33px;color:#008000;font-family:'Liberation Serif',serif;"><b>空</b><b>单</b><i style="width:1em;text-align:left;padding-left:.05em">:</i><i>9</i><i>9</i><i>1</i><i>2</i><i>6</i><i>1</i><i>2</i><i>4</i></div>
<div style="left:582px;top:1633px;width:2208px;height:53px;background:#f0f0f0"></div>
<div style="left:582px;top:1633px;width:2208px;height:1px;background:#fff"></div>
<div style="left:1283.3px;top:1635.5px;width:243.3px;height:50px;background:#fff;border:1px solid #000"></div>
<div id="t137" style="left:618px;top:1640.5px;font-size:32.5px;line-height:32.5px;color:#6d6d6d;font-family:'Liberation Sans',sans-serif;transform:scaleX(0.9083);transform-origin:left top;">GBPUSD,M5</div>
<div style="left:819.4px;top:1641px;width:1px;height:40px;background:#a0a0a0"></div>
<div id="t138" style="left:845.9px;top:1640.5px;font-size:32.5px;line-height:32.5px;color:#6d6d6d;font-family:'Liberation Sans',sans-serif;transform:scaleX(0.9404);transform-origin:left top;">USDCHF,M15</div>
<div style="left:1063.3px;top:1641px;width:1px;height:40px;background:#a0a0a0"></div>
<div id="t139" style="left:1088.4px;top:1640.5px;font-size:32.5px;line-height:32.5px;color:#6d6d6d;font-family:'Liberation Sans',sans-serif;transform:scaleX(0.8915);transform-origin:left top;">GBPUSD,H1</div>
<div id="t140" style="left:1308.6px;top:1640.5px;font-size:32.5px;line-height:32.5px;color:#000;font-family:'Liberation Sans',sans-serif;transform:scaleX(0.9160);transform-origin:left top;">GBPUSD,M15</div>
<div id="t141" style="left:1551.9px;top:1640.5px;font-size:32.5px;line-height:32.5px;color:#6d6d6d;font-family:'Liberation Sans',sans-serif;transform:scaleX(0.8937);transform-origin:left top;">GBPUSD,H1</div>
<div style="left:1747px;top:1641px;width:1px;height:40px;background:#a0a0a0"></div>
<div id="t142" style="left:1773.7px;top:1640.5px;font-size:32.5px;line-height:32.5px;color:#6d6d6d;font-family:'Liberation Sans',sans-serif;transform:scaleX(0.9282);transform-origin:left top;">XAUUSD,M1</div>
<div style="left:1979.7px;top:1641px;width:1px;height:40px;background:#a0a0a0"></div>
<div style="left:582px;top:1686.5px;width:2208px;height:1px;background:#fff"></div>
<svg style="position:absolute;left:2714px;top:1646px;" width="60" height="22" viewBox="0 0 60 22"><path d="M10 3 L3 11 L10 19 Z" fill="#a8a8a8"/><path d="M52 3 L59 11 L52 19 Z" fill="#a8a8a8"/></svg>
<div id="t143" style="left:-6px;top:1702.34px;font-size:33px;line-height:33px;color:#000;font-family:'Liberation Sans',sans-serif;transform:scaleX(0.9039);transform-origin:left top;"><b>寻</b><b>求</b><b>帮</b><b>助</b>,<b>请</b><b>按</b>F1<b>键</b></div>
<div style="left:891px;top:1691px;width:1px;height:49px;background:#a0a0a0"></div>
<div style="left:1203.4px;top:1691px;width:1px;height:49px;background:#a0a0a0"></div>
<div style="left:1487.4px;top:1691px;width:1px;height:49px;background:#a0a0a0"></div>
<div style="left:1676.8px;top:1691px;width:1px;height:49px;background:#a0a0a0"></div>
<div style="left:1866.3px;top:1691px;width:1px;height:49px;background:#a0a0a0"></div>
<div style="left:2047.7px;top:1691px;width:1px;height:49px;background:#a0a0a0"></div>
<div style="left:2233.3px;top:1691px;width:1px;height:49px;background:#a0a0a0"></div>
<div style="left:2412.7px;top:1691px;width:1px;height:49px;background:#a0a0a0"></div>
<div id="t144" style="left:898.7px;top:1700.22px;font-size:33px;line-height:33px;color:#000;font-family:'Liberation Sans',sans-serif;transform:scaleX(0.9942);transform-origin:left top;">Default</div>
<div id="t145" style="left:1209.6px;top:1700.22px;font-size:33px;line-height:33px;color:#000;font-family:'Liberation Sans',sans-serif;transform:scaleX(0.9567);transform-origin:left top;">2025.09.26 04:30</div>
<div id="t146" style="left:1493.3px;top:1700.22px;font-size:33px;line-height:33px;color:#000;font-family:'Liberation Sans',sans-serif;transform:scaleX(0.9532);transform-origin:left top;">O: 1.33448</div>
<div id="t147" style="left:1683.8px;top:1700.22px;font-size:33px;line-height:33px;color:#000;font-family:'Liberation Sans',sans-serif;transform:scaleX(0.9541);transform-origin:left top;">H: 1.33474</div>
<div id="t148" style="left:1872.5px;top:1700.22px;font-size:33px;line-height:33px;color:#000;font-family:'Liberation Sans',sans-serif;transform:scaleX(0.9455);transform-origin:left top;">L: 1.33422</div>
<div id="t149" style="left:2053.9px;top:1700.22px;font-size:33px;line-height:33px;color:#000;font-family:'Liberation Sans',sans-serif;transform:scaleX(0.9334);transform-origin:left top;">C: 1.33429</div>
<div id="t150" style="left:2239.5px;top:1700.22px;font-size:33px;line-height:33px;color:#000;font-family:'Liberation Sans',sans-serif;transform:scaleX(0.9443);transform-origin:left top;">V: 740</div>
<div id="t151" style="left:2491px;top:1700.22px;font-size:33px;line-height:33px;color:#000;font-family:'Liberation Sans',sans-serif;transform:scaleX(1.0221);transform-origin:left top;">334/2 kb</div>
<svg style="position:absolute;left:2410px;top:1690px" width="80" height="50" viewBox="2410 1690 80 50"><rect x="2418.00" y="1698" width="5.2" height="22.20" fill="#587800"/><rect x="2418.00" y="1723.70" width="5.2" height="6.90" fill="#003858"/><rect x="2426.05" y="1698" width="5.2" height="22.20" fill="#587800"/><rect x="2426.05" y="1721.00" width="5.2" height="9.60" fill="#003858"/><rect x="2434.10" y="1698" width="5.2" height="14.20" fill="#587800"/><rect x="2434.10" y="1718.90" width="5.2" height="11.70" fill="#003858"/><rect x="2442.15" y="1698" width="5.2" height="14.20" fill="#587800"/><rect x="2442.15" y="1716.20" width="5.2" height="14.40" fill="#003858"/><rect x="2450.20" y="1698" width="5.2" height="12.50" fill="#587800"/><rect x="2450.20" y="1713.80" width="5.2" height="16.80" fill="#003858"/><rect x="2458.25" y="1698" width="5.2" height="9.30" fill="#587800"/><rect x="2458.25" y="1710.90" width="5.2" height="19.70" fill="#003858"/><rect x="2466.30" y="1698" width="5.2" height="7.70" fill="#587800"/><rect x="2466.30" y="1708.90" width="5.2" height="21.70" fill="#003858"/><rect x="2474.35" y="1698" width="5.2" height="4.80" fill="#587800"/><rect x="2474.35" y="1705.70" width="5.2" height="24.90" fill="#003858"/></svg>
</body></html>
